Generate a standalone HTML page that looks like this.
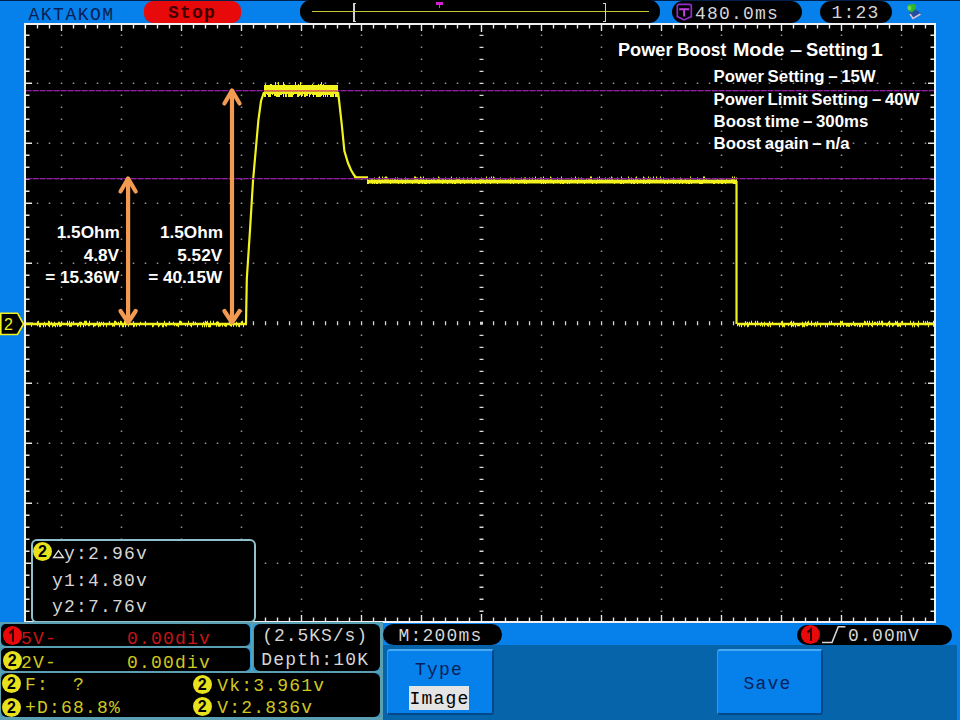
<!DOCTYPE html>
<html><head><meta charset="utf-8"><style>
*{margin:0;padding:0;box-sizing:border-box}
html,body{width:960px;height:720px;overflow:hidden;background:#0680ea;position:relative}
.a{position:absolute}
.m{position:absolute;font-family:"Liberation Mono",monospace;font-size:18px;line-height:18px;letter-spacing:1.2px;white-space:pre}
.c{position:absolute;font-family:"Liberation Sans",sans-serif;font-weight:bold;font-size:16.5px;line-height:18px;color:#fff;white-space:pre}
.pill{position:absolute;background:#000;border-radius:11px}
.s{position:absolute;font-family:"Liberation Serif",serif;line-height:18px;white-space:pre}
.s i{display:inline-block;font-style:normal;text-align:center;height:18px;vertical-align:top}
.circ{position:absolute;width:19px;height:19px;border-radius:50%;font-family:"Liberation Sans",sans-serif;font-weight:bold;font-size:16px;line-height:19px;text-align:center;color:#000}
</style></head><body>
<div class="a" style="left:0;top:0;width:960px;height:1px;background:#02204a"></div>
<div class="pill" style="left:144px;top:1px;width:97px;height:22px;background:#e80a0a;border-radius:9px"></div>
<div class="pill" style="left:300px;top:0px;width:360px;height:23px"></div>
<div class="a" style="left:312px;top:10.5px;width:337px;height:1.6px;background:#c8c832"></div>
<div class="a" style="left:353px;top:2.5px;width:1.6px;height:19.5px;background:#d0d0d0"></div>
<div class="a" style="left:353px;top:2.5px;width:2.8px;height:1.4px;background:#d0d0d0"></div>
<div class="a" style="left:353px;top:20.6px;width:2.8px;height:1.4px;background:#d0d0d0"></div>
<div class="a" style="left:604.5px;top:2.5px;width:1.6px;height:19.5px;background:#d0d0d0"></div>
<div class="a" style="left:603.3px;top:2.5px;width:2.8px;height:1.4px;background:#d0d0d0"></div>
<div class="a" style="left:603.3px;top:20.6px;width:2.8px;height:1.4px;background:#d0d0d0"></div>
<div class="a" style="left:436.3px;top:2.3px;width:6.6px;height:2.7px;background:#d020d0"></div>
<div class="a" style="left:438.8px;top:4.5px;width:1.6px;height:3px;background:#d040d0"></div>
<div class="pill" style="left:672px;top:1px;width:130px;height:22px"></div>
<svg class="a" style="left:676px;top:3px" width="17" height="19" viewBox="0 0 17 19"><path d="M3 1.3H13.5Q15.3 1.3 15.3 3.1V13.6L8.1 16.9L1.3 13.6V3.1Q1.3 1.3 3 1.3Z" fill="none" stroke="#9030c8" stroke-width="1.7"/><path d="M3.2 6.2H13.2M8.1 6.2V13.6" stroke="#c040e0" stroke-width="1.9"/></svg>
<div class="pill" style="left:820px;top:1px;width:72px;height:22px"></div>
<svg class="a" style="left:900px;top:0px" width="30" height="24" viewBox="0 0 30 24"><path d="M9 12.5L15.5 9.5L21.5 13.5L13 19.5Z" fill="#2050a0"/><path d="M10 14L13 18.5L20.5 14" fill="none" stroke="#dcc0d4" stroke-width="1.5"/><path d="M7 7.5C6.8 4.5 9.5 3.5 11.5 4.5C13.5 3.3 16.5 4.3 16 7.5C15.6 10 13.5 11 12 12.3C9.8 11.8 7.2 10.2 7 7.5Z" fill="#34b428"/><ellipse cx="9.5" cy="8" rx="2" ry="2.2" fill="#70e060" opacity="0.8"/></svg>

<div class="a" style="left:24px;top:23px;width:912px;height:600px;background:#000;border:2px solid #f0f0f0"></div>
<svg class="a" style="left:0;top:0" width="960" height="720" viewBox="0 0 960 720">
<path d="M36.7 82.5h1.6v1.6h-1.6zM36.7 142.5h1.6v1.6h-1.6zM36.7 202.5h1.6v1.6h-1.6zM36.7 262.5h1.6v1.6h-1.6zM36.7 382.5h1.6v1.6h-1.6zM36.7 442.5h1.6v1.6h-1.6zM36.7 502.5h1.6v1.6h-1.6zM36.7 562.5h1.6v1.6h-1.6zM48.7 82.5h1.6v1.6h-1.6zM48.7 142.5h1.6v1.6h-1.6zM48.7 202.5h1.6v1.6h-1.6zM48.7 262.5h1.6v1.6h-1.6zM48.7 382.5h1.6v1.6h-1.6zM48.7 442.5h1.6v1.6h-1.6zM48.7 502.5h1.6v1.6h-1.6zM48.7 562.5h1.6v1.6h-1.6zM60.7 34.5h1.6v1.6h-1.6zM60.7 46.5h1.6v1.6h-1.6zM60.7 58.5h1.6v1.6h-1.6zM60.7 70.5h1.6v1.6h-1.6zM60.7 82.5h1.6v1.6h-1.6zM60.7 94.5h1.6v1.6h-1.6zM60.7 106.5h1.6v1.6h-1.6zM60.7 118.5h1.6v1.6h-1.6zM60.7 130.5h1.6v1.6h-1.6zM60.7 142.5h1.6v1.6h-1.6zM60.7 154.5h1.6v1.6h-1.6zM60.7 166.5h1.6v1.6h-1.6zM60.7 178.5h1.6v1.6h-1.6zM60.7 190.5h1.6v1.6h-1.6zM60.7 202.5h1.6v1.6h-1.6zM60.7 214.5h1.6v1.6h-1.6zM60.7 226.5h1.6v1.6h-1.6zM60.7 238.5h1.6v1.6h-1.6zM60.7 250.5h1.6v1.6h-1.6zM60.7 262.5h1.6v1.6h-1.6zM60.7 274.5h1.6v1.6h-1.6zM60.7 286.5h1.6v1.6h-1.6zM60.7 298.5h1.6v1.6h-1.6zM60.7 310.5h1.6v1.6h-1.6zM60.7 334.5h1.6v1.6h-1.6zM60.7 346.5h1.6v1.6h-1.6zM60.7 358.5h1.6v1.6h-1.6zM60.7 370.5h1.6v1.6h-1.6zM60.7 382.5h1.6v1.6h-1.6zM60.7 394.5h1.6v1.6h-1.6zM60.7 406.5h1.6v1.6h-1.6zM60.7 418.5h1.6v1.6h-1.6zM60.7 430.5h1.6v1.6h-1.6zM60.7 442.5h1.6v1.6h-1.6zM60.7 454.5h1.6v1.6h-1.6zM60.7 466.5h1.6v1.6h-1.6zM60.7 478.5h1.6v1.6h-1.6zM60.7 490.5h1.6v1.6h-1.6zM60.7 502.5h1.6v1.6h-1.6zM60.7 514.5h1.6v1.6h-1.6zM60.7 526.5h1.6v1.6h-1.6zM60.7 538.5h1.6v1.6h-1.6zM60.7 550.5h1.6v1.6h-1.6zM60.7 562.5h1.6v1.6h-1.6zM60.7 574.5h1.6v1.6h-1.6zM60.7 586.5h1.6v1.6h-1.6zM60.7 598.5h1.6v1.6h-1.6zM60.7 610.5h1.6v1.6h-1.6zM72.7 82.5h1.6v1.6h-1.6zM72.7 142.5h1.6v1.6h-1.6zM72.7 202.5h1.6v1.6h-1.6zM72.7 262.5h1.6v1.6h-1.6zM72.7 382.5h1.6v1.6h-1.6zM72.7 442.5h1.6v1.6h-1.6zM72.7 502.5h1.6v1.6h-1.6zM72.7 562.5h1.6v1.6h-1.6zM84.7 82.5h1.6v1.6h-1.6zM84.7 142.5h1.6v1.6h-1.6zM84.7 202.5h1.6v1.6h-1.6zM84.7 262.5h1.6v1.6h-1.6zM84.7 382.5h1.6v1.6h-1.6zM84.7 442.5h1.6v1.6h-1.6zM84.7 502.5h1.6v1.6h-1.6zM84.7 562.5h1.6v1.6h-1.6zM96.7 82.5h1.6v1.6h-1.6zM96.7 142.5h1.6v1.6h-1.6zM96.7 202.5h1.6v1.6h-1.6zM96.7 262.5h1.6v1.6h-1.6zM96.7 382.5h1.6v1.6h-1.6zM96.7 442.5h1.6v1.6h-1.6zM96.7 502.5h1.6v1.6h-1.6zM96.7 562.5h1.6v1.6h-1.6zM108.7 82.5h1.6v1.6h-1.6zM108.7 142.5h1.6v1.6h-1.6zM108.7 202.5h1.6v1.6h-1.6zM108.7 262.5h1.6v1.6h-1.6zM108.7 382.5h1.6v1.6h-1.6zM108.7 442.5h1.6v1.6h-1.6zM108.7 502.5h1.6v1.6h-1.6zM108.7 562.5h1.6v1.6h-1.6zM120.7 34.5h1.6v1.6h-1.6zM120.7 46.5h1.6v1.6h-1.6zM120.7 58.5h1.6v1.6h-1.6zM120.7 70.5h1.6v1.6h-1.6zM120.7 82.5h1.6v1.6h-1.6zM120.7 94.5h1.6v1.6h-1.6zM120.7 106.5h1.6v1.6h-1.6zM120.7 118.5h1.6v1.6h-1.6zM120.7 130.5h1.6v1.6h-1.6zM120.7 142.5h1.6v1.6h-1.6zM120.7 154.5h1.6v1.6h-1.6zM120.7 166.5h1.6v1.6h-1.6zM120.7 178.5h1.6v1.6h-1.6zM120.7 190.5h1.6v1.6h-1.6zM120.7 202.5h1.6v1.6h-1.6zM120.7 214.5h1.6v1.6h-1.6zM120.7 226.5h1.6v1.6h-1.6zM120.7 238.5h1.6v1.6h-1.6zM120.7 250.5h1.6v1.6h-1.6zM120.7 262.5h1.6v1.6h-1.6zM120.7 274.5h1.6v1.6h-1.6zM120.7 286.5h1.6v1.6h-1.6zM120.7 298.5h1.6v1.6h-1.6zM120.7 310.5h1.6v1.6h-1.6zM120.7 334.5h1.6v1.6h-1.6zM120.7 346.5h1.6v1.6h-1.6zM120.7 358.5h1.6v1.6h-1.6zM120.7 370.5h1.6v1.6h-1.6zM120.7 382.5h1.6v1.6h-1.6zM120.7 394.5h1.6v1.6h-1.6zM120.7 406.5h1.6v1.6h-1.6zM120.7 418.5h1.6v1.6h-1.6zM120.7 430.5h1.6v1.6h-1.6zM120.7 442.5h1.6v1.6h-1.6zM120.7 454.5h1.6v1.6h-1.6zM120.7 466.5h1.6v1.6h-1.6zM120.7 478.5h1.6v1.6h-1.6zM120.7 490.5h1.6v1.6h-1.6zM120.7 502.5h1.6v1.6h-1.6zM120.7 514.5h1.6v1.6h-1.6zM120.7 526.5h1.6v1.6h-1.6zM120.7 538.5h1.6v1.6h-1.6zM120.7 550.5h1.6v1.6h-1.6zM120.7 562.5h1.6v1.6h-1.6zM120.7 574.5h1.6v1.6h-1.6zM120.7 586.5h1.6v1.6h-1.6zM120.7 598.5h1.6v1.6h-1.6zM120.7 610.5h1.6v1.6h-1.6zM132.7 82.5h1.6v1.6h-1.6zM132.7 142.5h1.6v1.6h-1.6zM132.7 202.5h1.6v1.6h-1.6zM132.7 262.5h1.6v1.6h-1.6zM132.7 382.5h1.6v1.6h-1.6zM132.7 442.5h1.6v1.6h-1.6zM132.7 502.5h1.6v1.6h-1.6zM132.7 562.5h1.6v1.6h-1.6zM144.7 82.5h1.6v1.6h-1.6zM144.7 142.5h1.6v1.6h-1.6zM144.7 202.5h1.6v1.6h-1.6zM144.7 262.5h1.6v1.6h-1.6zM144.7 382.5h1.6v1.6h-1.6zM144.7 442.5h1.6v1.6h-1.6zM144.7 502.5h1.6v1.6h-1.6zM144.7 562.5h1.6v1.6h-1.6zM156.7 82.5h1.6v1.6h-1.6zM156.7 142.5h1.6v1.6h-1.6zM156.7 202.5h1.6v1.6h-1.6zM156.7 262.5h1.6v1.6h-1.6zM156.7 382.5h1.6v1.6h-1.6zM156.7 442.5h1.6v1.6h-1.6zM156.7 502.5h1.6v1.6h-1.6zM156.7 562.5h1.6v1.6h-1.6zM168.7 82.5h1.6v1.6h-1.6zM168.7 142.5h1.6v1.6h-1.6zM168.7 202.5h1.6v1.6h-1.6zM168.7 262.5h1.6v1.6h-1.6zM168.7 382.5h1.6v1.6h-1.6zM168.7 442.5h1.6v1.6h-1.6zM168.7 502.5h1.6v1.6h-1.6zM168.7 562.5h1.6v1.6h-1.6zM180.7 34.5h1.6v1.6h-1.6zM180.7 46.5h1.6v1.6h-1.6zM180.7 58.5h1.6v1.6h-1.6zM180.7 70.5h1.6v1.6h-1.6zM180.7 82.5h1.6v1.6h-1.6zM180.7 94.5h1.6v1.6h-1.6zM180.7 106.5h1.6v1.6h-1.6zM180.7 118.5h1.6v1.6h-1.6zM180.7 130.5h1.6v1.6h-1.6zM180.7 142.5h1.6v1.6h-1.6zM180.7 154.5h1.6v1.6h-1.6zM180.7 166.5h1.6v1.6h-1.6zM180.7 178.5h1.6v1.6h-1.6zM180.7 190.5h1.6v1.6h-1.6zM180.7 202.5h1.6v1.6h-1.6zM180.7 214.5h1.6v1.6h-1.6zM180.7 226.5h1.6v1.6h-1.6zM180.7 238.5h1.6v1.6h-1.6zM180.7 250.5h1.6v1.6h-1.6zM180.7 262.5h1.6v1.6h-1.6zM180.7 274.5h1.6v1.6h-1.6zM180.7 286.5h1.6v1.6h-1.6zM180.7 298.5h1.6v1.6h-1.6zM180.7 310.5h1.6v1.6h-1.6zM180.7 334.5h1.6v1.6h-1.6zM180.7 346.5h1.6v1.6h-1.6zM180.7 358.5h1.6v1.6h-1.6zM180.7 370.5h1.6v1.6h-1.6zM180.7 382.5h1.6v1.6h-1.6zM180.7 394.5h1.6v1.6h-1.6zM180.7 406.5h1.6v1.6h-1.6zM180.7 418.5h1.6v1.6h-1.6zM180.7 430.5h1.6v1.6h-1.6zM180.7 442.5h1.6v1.6h-1.6zM180.7 454.5h1.6v1.6h-1.6zM180.7 466.5h1.6v1.6h-1.6zM180.7 478.5h1.6v1.6h-1.6zM180.7 490.5h1.6v1.6h-1.6zM180.7 502.5h1.6v1.6h-1.6zM180.7 514.5h1.6v1.6h-1.6zM180.7 526.5h1.6v1.6h-1.6zM180.7 538.5h1.6v1.6h-1.6zM180.7 550.5h1.6v1.6h-1.6zM180.7 562.5h1.6v1.6h-1.6zM180.7 574.5h1.6v1.6h-1.6zM180.7 586.5h1.6v1.6h-1.6zM180.7 598.5h1.6v1.6h-1.6zM180.7 610.5h1.6v1.6h-1.6zM192.7 82.5h1.6v1.6h-1.6zM192.7 142.5h1.6v1.6h-1.6zM192.7 202.5h1.6v1.6h-1.6zM192.7 262.5h1.6v1.6h-1.6zM192.7 382.5h1.6v1.6h-1.6zM192.7 442.5h1.6v1.6h-1.6zM192.7 502.5h1.6v1.6h-1.6zM192.7 562.5h1.6v1.6h-1.6zM204.7 82.5h1.6v1.6h-1.6zM204.7 142.5h1.6v1.6h-1.6zM204.7 202.5h1.6v1.6h-1.6zM204.7 262.5h1.6v1.6h-1.6zM204.7 382.5h1.6v1.6h-1.6zM204.7 442.5h1.6v1.6h-1.6zM204.7 502.5h1.6v1.6h-1.6zM204.7 562.5h1.6v1.6h-1.6zM216.7 82.5h1.6v1.6h-1.6zM216.7 142.5h1.6v1.6h-1.6zM216.7 202.5h1.6v1.6h-1.6zM216.7 262.5h1.6v1.6h-1.6zM216.7 382.5h1.6v1.6h-1.6zM216.7 442.5h1.6v1.6h-1.6zM216.7 502.5h1.6v1.6h-1.6zM216.7 562.5h1.6v1.6h-1.6zM228.7 82.5h1.6v1.6h-1.6zM228.7 142.5h1.6v1.6h-1.6zM228.7 202.5h1.6v1.6h-1.6zM228.7 262.5h1.6v1.6h-1.6zM228.7 382.5h1.6v1.6h-1.6zM228.7 442.5h1.6v1.6h-1.6zM228.7 502.5h1.6v1.6h-1.6zM228.7 562.5h1.6v1.6h-1.6zM240.7 34.5h1.6v1.6h-1.6zM240.7 46.5h1.6v1.6h-1.6zM240.7 58.5h1.6v1.6h-1.6zM240.7 70.5h1.6v1.6h-1.6zM240.7 82.5h1.6v1.6h-1.6zM240.7 94.5h1.6v1.6h-1.6zM240.7 106.5h1.6v1.6h-1.6zM240.7 118.5h1.6v1.6h-1.6zM240.7 130.5h1.6v1.6h-1.6zM240.7 142.5h1.6v1.6h-1.6zM240.7 154.5h1.6v1.6h-1.6zM240.7 166.5h1.6v1.6h-1.6zM240.7 178.5h1.6v1.6h-1.6zM240.7 190.5h1.6v1.6h-1.6zM240.7 202.5h1.6v1.6h-1.6zM240.7 214.5h1.6v1.6h-1.6zM240.7 226.5h1.6v1.6h-1.6zM240.7 238.5h1.6v1.6h-1.6zM240.7 250.5h1.6v1.6h-1.6zM240.7 262.5h1.6v1.6h-1.6zM240.7 274.5h1.6v1.6h-1.6zM240.7 286.5h1.6v1.6h-1.6zM240.7 298.5h1.6v1.6h-1.6zM240.7 310.5h1.6v1.6h-1.6zM240.7 334.5h1.6v1.6h-1.6zM240.7 346.5h1.6v1.6h-1.6zM240.7 358.5h1.6v1.6h-1.6zM240.7 370.5h1.6v1.6h-1.6zM240.7 382.5h1.6v1.6h-1.6zM240.7 394.5h1.6v1.6h-1.6zM240.7 406.5h1.6v1.6h-1.6zM240.7 418.5h1.6v1.6h-1.6zM240.7 430.5h1.6v1.6h-1.6zM240.7 442.5h1.6v1.6h-1.6zM240.7 454.5h1.6v1.6h-1.6zM240.7 466.5h1.6v1.6h-1.6zM240.7 478.5h1.6v1.6h-1.6zM240.7 490.5h1.6v1.6h-1.6zM240.7 502.5h1.6v1.6h-1.6zM240.7 514.5h1.6v1.6h-1.6zM240.7 526.5h1.6v1.6h-1.6zM240.7 538.5h1.6v1.6h-1.6zM240.7 550.5h1.6v1.6h-1.6zM240.7 562.5h1.6v1.6h-1.6zM240.7 574.5h1.6v1.6h-1.6zM240.7 586.5h1.6v1.6h-1.6zM240.7 598.5h1.6v1.6h-1.6zM240.7 610.5h1.6v1.6h-1.6zM252.7 82.5h1.6v1.6h-1.6zM252.7 142.5h1.6v1.6h-1.6zM252.7 202.5h1.6v1.6h-1.6zM252.7 262.5h1.6v1.6h-1.6zM252.7 382.5h1.6v1.6h-1.6zM252.7 442.5h1.6v1.6h-1.6zM252.7 502.5h1.6v1.6h-1.6zM252.7 562.5h1.6v1.6h-1.6zM264.7 82.5h1.6v1.6h-1.6zM264.7 142.5h1.6v1.6h-1.6zM264.7 202.5h1.6v1.6h-1.6zM264.7 262.5h1.6v1.6h-1.6zM264.7 382.5h1.6v1.6h-1.6zM264.7 442.5h1.6v1.6h-1.6zM264.7 502.5h1.6v1.6h-1.6zM264.7 562.5h1.6v1.6h-1.6zM276.7 82.5h1.6v1.6h-1.6zM276.7 142.5h1.6v1.6h-1.6zM276.7 202.5h1.6v1.6h-1.6zM276.7 262.5h1.6v1.6h-1.6zM276.7 382.5h1.6v1.6h-1.6zM276.7 442.5h1.6v1.6h-1.6zM276.7 502.5h1.6v1.6h-1.6zM276.7 562.5h1.6v1.6h-1.6zM288.7 82.5h1.6v1.6h-1.6zM288.7 142.5h1.6v1.6h-1.6zM288.7 202.5h1.6v1.6h-1.6zM288.7 262.5h1.6v1.6h-1.6zM288.7 382.5h1.6v1.6h-1.6zM288.7 442.5h1.6v1.6h-1.6zM288.7 502.5h1.6v1.6h-1.6zM288.7 562.5h1.6v1.6h-1.6zM300.7 34.5h1.6v1.6h-1.6zM300.7 46.5h1.6v1.6h-1.6zM300.7 58.5h1.6v1.6h-1.6zM300.7 70.5h1.6v1.6h-1.6zM300.7 82.5h1.6v1.6h-1.6zM300.7 94.5h1.6v1.6h-1.6zM300.7 106.5h1.6v1.6h-1.6zM300.7 118.5h1.6v1.6h-1.6zM300.7 130.5h1.6v1.6h-1.6zM300.7 142.5h1.6v1.6h-1.6zM300.7 154.5h1.6v1.6h-1.6zM300.7 166.5h1.6v1.6h-1.6zM300.7 178.5h1.6v1.6h-1.6zM300.7 190.5h1.6v1.6h-1.6zM300.7 202.5h1.6v1.6h-1.6zM300.7 214.5h1.6v1.6h-1.6zM300.7 226.5h1.6v1.6h-1.6zM300.7 238.5h1.6v1.6h-1.6zM300.7 250.5h1.6v1.6h-1.6zM300.7 262.5h1.6v1.6h-1.6zM300.7 274.5h1.6v1.6h-1.6zM300.7 286.5h1.6v1.6h-1.6zM300.7 298.5h1.6v1.6h-1.6zM300.7 310.5h1.6v1.6h-1.6zM300.7 334.5h1.6v1.6h-1.6zM300.7 346.5h1.6v1.6h-1.6zM300.7 358.5h1.6v1.6h-1.6zM300.7 370.5h1.6v1.6h-1.6zM300.7 382.5h1.6v1.6h-1.6zM300.7 394.5h1.6v1.6h-1.6zM300.7 406.5h1.6v1.6h-1.6zM300.7 418.5h1.6v1.6h-1.6zM300.7 430.5h1.6v1.6h-1.6zM300.7 442.5h1.6v1.6h-1.6zM300.7 454.5h1.6v1.6h-1.6zM300.7 466.5h1.6v1.6h-1.6zM300.7 478.5h1.6v1.6h-1.6zM300.7 490.5h1.6v1.6h-1.6zM300.7 502.5h1.6v1.6h-1.6zM300.7 514.5h1.6v1.6h-1.6zM300.7 526.5h1.6v1.6h-1.6zM300.7 538.5h1.6v1.6h-1.6zM300.7 550.5h1.6v1.6h-1.6zM300.7 562.5h1.6v1.6h-1.6zM300.7 574.5h1.6v1.6h-1.6zM300.7 586.5h1.6v1.6h-1.6zM300.7 598.5h1.6v1.6h-1.6zM300.7 610.5h1.6v1.6h-1.6zM312.7 82.5h1.6v1.6h-1.6zM312.7 142.5h1.6v1.6h-1.6zM312.7 202.5h1.6v1.6h-1.6zM312.7 262.5h1.6v1.6h-1.6zM312.7 382.5h1.6v1.6h-1.6zM312.7 442.5h1.6v1.6h-1.6zM312.7 502.5h1.6v1.6h-1.6zM312.7 562.5h1.6v1.6h-1.6zM324.7 82.5h1.6v1.6h-1.6zM324.7 142.5h1.6v1.6h-1.6zM324.7 202.5h1.6v1.6h-1.6zM324.7 262.5h1.6v1.6h-1.6zM324.7 382.5h1.6v1.6h-1.6zM324.7 442.5h1.6v1.6h-1.6zM324.7 502.5h1.6v1.6h-1.6zM324.7 562.5h1.6v1.6h-1.6zM336.7 82.5h1.6v1.6h-1.6zM336.7 142.5h1.6v1.6h-1.6zM336.7 202.5h1.6v1.6h-1.6zM336.7 262.5h1.6v1.6h-1.6zM336.7 382.5h1.6v1.6h-1.6zM336.7 442.5h1.6v1.6h-1.6zM336.7 502.5h1.6v1.6h-1.6zM336.7 562.5h1.6v1.6h-1.6zM348.7 82.5h1.6v1.6h-1.6zM348.7 142.5h1.6v1.6h-1.6zM348.7 202.5h1.6v1.6h-1.6zM348.7 262.5h1.6v1.6h-1.6zM348.7 382.5h1.6v1.6h-1.6zM348.7 442.5h1.6v1.6h-1.6zM348.7 502.5h1.6v1.6h-1.6zM348.7 562.5h1.6v1.6h-1.6zM360.7 34.5h1.6v1.6h-1.6zM360.7 46.5h1.6v1.6h-1.6zM360.7 58.5h1.6v1.6h-1.6zM360.7 70.5h1.6v1.6h-1.6zM360.7 82.5h1.6v1.6h-1.6zM360.7 94.5h1.6v1.6h-1.6zM360.7 106.5h1.6v1.6h-1.6zM360.7 118.5h1.6v1.6h-1.6zM360.7 130.5h1.6v1.6h-1.6zM360.7 142.5h1.6v1.6h-1.6zM360.7 154.5h1.6v1.6h-1.6zM360.7 166.5h1.6v1.6h-1.6zM360.7 178.5h1.6v1.6h-1.6zM360.7 190.5h1.6v1.6h-1.6zM360.7 202.5h1.6v1.6h-1.6zM360.7 214.5h1.6v1.6h-1.6zM360.7 226.5h1.6v1.6h-1.6zM360.7 238.5h1.6v1.6h-1.6zM360.7 250.5h1.6v1.6h-1.6zM360.7 262.5h1.6v1.6h-1.6zM360.7 274.5h1.6v1.6h-1.6zM360.7 286.5h1.6v1.6h-1.6zM360.7 298.5h1.6v1.6h-1.6zM360.7 310.5h1.6v1.6h-1.6zM360.7 334.5h1.6v1.6h-1.6zM360.7 346.5h1.6v1.6h-1.6zM360.7 358.5h1.6v1.6h-1.6zM360.7 370.5h1.6v1.6h-1.6zM360.7 382.5h1.6v1.6h-1.6zM360.7 394.5h1.6v1.6h-1.6zM360.7 406.5h1.6v1.6h-1.6zM360.7 418.5h1.6v1.6h-1.6zM360.7 430.5h1.6v1.6h-1.6zM360.7 442.5h1.6v1.6h-1.6zM360.7 454.5h1.6v1.6h-1.6zM360.7 466.5h1.6v1.6h-1.6zM360.7 478.5h1.6v1.6h-1.6zM360.7 490.5h1.6v1.6h-1.6zM360.7 502.5h1.6v1.6h-1.6zM360.7 514.5h1.6v1.6h-1.6zM360.7 526.5h1.6v1.6h-1.6zM360.7 538.5h1.6v1.6h-1.6zM360.7 550.5h1.6v1.6h-1.6zM360.7 562.5h1.6v1.6h-1.6zM360.7 574.5h1.6v1.6h-1.6zM360.7 586.5h1.6v1.6h-1.6zM360.7 598.5h1.6v1.6h-1.6zM360.7 610.5h1.6v1.6h-1.6zM372.7 82.5h1.6v1.6h-1.6zM372.7 142.5h1.6v1.6h-1.6zM372.7 202.5h1.6v1.6h-1.6zM372.7 262.5h1.6v1.6h-1.6zM372.7 382.5h1.6v1.6h-1.6zM372.7 442.5h1.6v1.6h-1.6zM372.7 502.5h1.6v1.6h-1.6zM372.7 562.5h1.6v1.6h-1.6zM384.7 82.5h1.6v1.6h-1.6zM384.7 142.5h1.6v1.6h-1.6zM384.7 202.5h1.6v1.6h-1.6zM384.7 262.5h1.6v1.6h-1.6zM384.7 382.5h1.6v1.6h-1.6zM384.7 442.5h1.6v1.6h-1.6zM384.7 502.5h1.6v1.6h-1.6zM384.7 562.5h1.6v1.6h-1.6zM396.7 82.5h1.6v1.6h-1.6zM396.7 142.5h1.6v1.6h-1.6zM396.7 202.5h1.6v1.6h-1.6zM396.7 262.5h1.6v1.6h-1.6zM396.7 382.5h1.6v1.6h-1.6zM396.7 442.5h1.6v1.6h-1.6zM396.7 502.5h1.6v1.6h-1.6zM396.7 562.5h1.6v1.6h-1.6zM408.7 82.5h1.6v1.6h-1.6zM408.7 142.5h1.6v1.6h-1.6zM408.7 202.5h1.6v1.6h-1.6zM408.7 262.5h1.6v1.6h-1.6zM408.7 382.5h1.6v1.6h-1.6zM408.7 442.5h1.6v1.6h-1.6zM408.7 502.5h1.6v1.6h-1.6zM408.7 562.5h1.6v1.6h-1.6zM420.7 34.5h1.6v1.6h-1.6zM420.7 46.5h1.6v1.6h-1.6zM420.7 58.5h1.6v1.6h-1.6zM420.7 70.5h1.6v1.6h-1.6zM420.7 82.5h1.6v1.6h-1.6zM420.7 94.5h1.6v1.6h-1.6zM420.7 106.5h1.6v1.6h-1.6zM420.7 118.5h1.6v1.6h-1.6zM420.7 130.5h1.6v1.6h-1.6zM420.7 142.5h1.6v1.6h-1.6zM420.7 154.5h1.6v1.6h-1.6zM420.7 166.5h1.6v1.6h-1.6zM420.7 178.5h1.6v1.6h-1.6zM420.7 190.5h1.6v1.6h-1.6zM420.7 202.5h1.6v1.6h-1.6zM420.7 214.5h1.6v1.6h-1.6zM420.7 226.5h1.6v1.6h-1.6zM420.7 238.5h1.6v1.6h-1.6zM420.7 250.5h1.6v1.6h-1.6zM420.7 262.5h1.6v1.6h-1.6zM420.7 274.5h1.6v1.6h-1.6zM420.7 286.5h1.6v1.6h-1.6zM420.7 298.5h1.6v1.6h-1.6zM420.7 310.5h1.6v1.6h-1.6zM420.7 334.5h1.6v1.6h-1.6zM420.7 346.5h1.6v1.6h-1.6zM420.7 358.5h1.6v1.6h-1.6zM420.7 370.5h1.6v1.6h-1.6zM420.7 382.5h1.6v1.6h-1.6zM420.7 394.5h1.6v1.6h-1.6zM420.7 406.5h1.6v1.6h-1.6zM420.7 418.5h1.6v1.6h-1.6zM420.7 430.5h1.6v1.6h-1.6zM420.7 442.5h1.6v1.6h-1.6zM420.7 454.5h1.6v1.6h-1.6zM420.7 466.5h1.6v1.6h-1.6zM420.7 478.5h1.6v1.6h-1.6zM420.7 490.5h1.6v1.6h-1.6zM420.7 502.5h1.6v1.6h-1.6zM420.7 514.5h1.6v1.6h-1.6zM420.7 526.5h1.6v1.6h-1.6zM420.7 538.5h1.6v1.6h-1.6zM420.7 550.5h1.6v1.6h-1.6zM420.7 562.5h1.6v1.6h-1.6zM420.7 574.5h1.6v1.6h-1.6zM420.7 586.5h1.6v1.6h-1.6zM420.7 598.5h1.6v1.6h-1.6zM420.7 610.5h1.6v1.6h-1.6zM432.7 82.5h1.6v1.6h-1.6zM432.7 142.5h1.6v1.6h-1.6zM432.7 202.5h1.6v1.6h-1.6zM432.7 262.5h1.6v1.6h-1.6zM432.7 382.5h1.6v1.6h-1.6zM432.7 442.5h1.6v1.6h-1.6zM432.7 502.5h1.6v1.6h-1.6zM432.7 562.5h1.6v1.6h-1.6zM444.7 82.5h1.6v1.6h-1.6zM444.7 142.5h1.6v1.6h-1.6zM444.7 202.5h1.6v1.6h-1.6zM444.7 262.5h1.6v1.6h-1.6zM444.7 382.5h1.6v1.6h-1.6zM444.7 442.5h1.6v1.6h-1.6zM444.7 502.5h1.6v1.6h-1.6zM444.7 562.5h1.6v1.6h-1.6zM456.7 82.5h1.6v1.6h-1.6zM456.7 142.5h1.6v1.6h-1.6zM456.7 202.5h1.6v1.6h-1.6zM456.7 262.5h1.6v1.6h-1.6zM456.7 382.5h1.6v1.6h-1.6zM456.7 442.5h1.6v1.6h-1.6zM456.7 502.5h1.6v1.6h-1.6zM456.7 562.5h1.6v1.6h-1.6zM468.7 82.5h1.6v1.6h-1.6zM468.7 142.5h1.6v1.6h-1.6zM468.7 202.5h1.6v1.6h-1.6zM468.7 262.5h1.6v1.6h-1.6zM468.7 382.5h1.6v1.6h-1.6zM468.7 442.5h1.6v1.6h-1.6zM468.7 502.5h1.6v1.6h-1.6zM468.7 562.5h1.6v1.6h-1.6zM492.7 82.5h1.6v1.6h-1.6zM492.7 142.5h1.6v1.6h-1.6zM492.7 202.5h1.6v1.6h-1.6zM492.7 262.5h1.6v1.6h-1.6zM492.7 382.5h1.6v1.6h-1.6zM492.7 442.5h1.6v1.6h-1.6zM492.7 502.5h1.6v1.6h-1.6zM492.7 562.5h1.6v1.6h-1.6zM504.7 82.5h1.6v1.6h-1.6zM504.7 142.5h1.6v1.6h-1.6zM504.7 202.5h1.6v1.6h-1.6zM504.7 262.5h1.6v1.6h-1.6zM504.7 382.5h1.6v1.6h-1.6zM504.7 442.5h1.6v1.6h-1.6zM504.7 502.5h1.6v1.6h-1.6zM504.7 562.5h1.6v1.6h-1.6zM516.7 82.5h1.6v1.6h-1.6zM516.7 142.5h1.6v1.6h-1.6zM516.7 202.5h1.6v1.6h-1.6zM516.7 262.5h1.6v1.6h-1.6zM516.7 382.5h1.6v1.6h-1.6zM516.7 442.5h1.6v1.6h-1.6zM516.7 502.5h1.6v1.6h-1.6zM516.7 562.5h1.6v1.6h-1.6zM528.7 82.5h1.6v1.6h-1.6zM528.7 142.5h1.6v1.6h-1.6zM528.7 202.5h1.6v1.6h-1.6zM528.7 262.5h1.6v1.6h-1.6zM528.7 382.5h1.6v1.6h-1.6zM528.7 442.5h1.6v1.6h-1.6zM528.7 502.5h1.6v1.6h-1.6zM528.7 562.5h1.6v1.6h-1.6zM540.7 34.5h1.6v1.6h-1.6zM540.7 46.5h1.6v1.6h-1.6zM540.7 58.5h1.6v1.6h-1.6zM540.7 70.5h1.6v1.6h-1.6zM540.7 82.5h1.6v1.6h-1.6zM540.7 94.5h1.6v1.6h-1.6zM540.7 106.5h1.6v1.6h-1.6zM540.7 118.5h1.6v1.6h-1.6zM540.7 130.5h1.6v1.6h-1.6zM540.7 142.5h1.6v1.6h-1.6zM540.7 154.5h1.6v1.6h-1.6zM540.7 166.5h1.6v1.6h-1.6zM540.7 178.5h1.6v1.6h-1.6zM540.7 190.5h1.6v1.6h-1.6zM540.7 202.5h1.6v1.6h-1.6zM540.7 214.5h1.6v1.6h-1.6zM540.7 226.5h1.6v1.6h-1.6zM540.7 238.5h1.6v1.6h-1.6zM540.7 250.5h1.6v1.6h-1.6zM540.7 262.5h1.6v1.6h-1.6zM540.7 274.5h1.6v1.6h-1.6zM540.7 286.5h1.6v1.6h-1.6zM540.7 298.5h1.6v1.6h-1.6zM540.7 310.5h1.6v1.6h-1.6zM540.7 334.5h1.6v1.6h-1.6zM540.7 346.5h1.6v1.6h-1.6zM540.7 358.5h1.6v1.6h-1.6zM540.7 370.5h1.6v1.6h-1.6zM540.7 382.5h1.6v1.6h-1.6zM540.7 394.5h1.6v1.6h-1.6zM540.7 406.5h1.6v1.6h-1.6zM540.7 418.5h1.6v1.6h-1.6zM540.7 430.5h1.6v1.6h-1.6zM540.7 442.5h1.6v1.6h-1.6zM540.7 454.5h1.6v1.6h-1.6zM540.7 466.5h1.6v1.6h-1.6zM540.7 478.5h1.6v1.6h-1.6zM540.7 490.5h1.6v1.6h-1.6zM540.7 502.5h1.6v1.6h-1.6zM540.7 514.5h1.6v1.6h-1.6zM540.7 526.5h1.6v1.6h-1.6zM540.7 538.5h1.6v1.6h-1.6zM540.7 550.5h1.6v1.6h-1.6zM540.7 562.5h1.6v1.6h-1.6zM540.7 574.5h1.6v1.6h-1.6zM540.7 586.5h1.6v1.6h-1.6zM540.7 598.5h1.6v1.6h-1.6zM540.7 610.5h1.6v1.6h-1.6zM552.7 82.5h1.6v1.6h-1.6zM552.7 142.5h1.6v1.6h-1.6zM552.7 202.5h1.6v1.6h-1.6zM552.7 262.5h1.6v1.6h-1.6zM552.7 382.5h1.6v1.6h-1.6zM552.7 442.5h1.6v1.6h-1.6zM552.7 502.5h1.6v1.6h-1.6zM552.7 562.5h1.6v1.6h-1.6zM564.7 82.5h1.6v1.6h-1.6zM564.7 142.5h1.6v1.6h-1.6zM564.7 202.5h1.6v1.6h-1.6zM564.7 262.5h1.6v1.6h-1.6zM564.7 382.5h1.6v1.6h-1.6zM564.7 442.5h1.6v1.6h-1.6zM564.7 502.5h1.6v1.6h-1.6zM564.7 562.5h1.6v1.6h-1.6zM576.7 82.5h1.6v1.6h-1.6zM576.7 142.5h1.6v1.6h-1.6zM576.7 202.5h1.6v1.6h-1.6zM576.7 262.5h1.6v1.6h-1.6zM576.7 382.5h1.6v1.6h-1.6zM576.7 442.5h1.6v1.6h-1.6zM576.7 502.5h1.6v1.6h-1.6zM576.7 562.5h1.6v1.6h-1.6zM588.7 82.5h1.6v1.6h-1.6zM588.7 142.5h1.6v1.6h-1.6zM588.7 202.5h1.6v1.6h-1.6zM588.7 262.5h1.6v1.6h-1.6zM588.7 382.5h1.6v1.6h-1.6zM588.7 442.5h1.6v1.6h-1.6zM588.7 502.5h1.6v1.6h-1.6zM588.7 562.5h1.6v1.6h-1.6zM600.7 34.5h1.6v1.6h-1.6zM600.7 46.5h1.6v1.6h-1.6zM600.7 58.5h1.6v1.6h-1.6zM600.7 70.5h1.6v1.6h-1.6zM600.7 82.5h1.6v1.6h-1.6zM600.7 94.5h1.6v1.6h-1.6zM600.7 106.5h1.6v1.6h-1.6zM600.7 118.5h1.6v1.6h-1.6zM600.7 130.5h1.6v1.6h-1.6zM600.7 142.5h1.6v1.6h-1.6zM600.7 154.5h1.6v1.6h-1.6zM600.7 166.5h1.6v1.6h-1.6zM600.7 178.5h1.6v1.6h-1.6zM600.7 190.5h1.6v1.6h-1.6zM600.7 202.5h1.6v1.6h-1.6zM600.7 214.5h1.6v1.6h-1.6zM600.7 226.5h1.6v1.6h-1.6zM600.7 238.5h1.6v1.6h-1.6zM600.7 250.5h1.6v1.6h-1.6zM600.7 262.5h1.6v1.6h-1.6zM600.7 274.5h1.6v1.6h-1.6zM600.7 286.5h1.6v1.6h-1.6zM600.7 298.5h1.6v1.6h-1.6zM600.7 310.5h1.6v1.6h-1.6zM600.7 334.5h1.6v1.6h-1.6zM600.7 346.5h1.6v1.6h-1.6zM600.7 358.5h1.6v1.6h-1.6zM600.7 370.5h1.6v1.6h-1.6zM600.7 382.5h1.6v1.6h-1.6zM600.7 394.5h1.6v1.6h-1.6zM600.7 406.5h1.6v1.6h-1.6zM600.7 418.5h1.6v1.6h-1.6zM600.7 430.5h1.6v1.6h-1.6zM600.7 442.5h1.6v1.6h-1.6zM600.7 454.5h1.6v1.6h-1.6zM600.7 466.5h1.6v1.6h-1.6zM600.7 478.5h1.6v1.6h-1.6zM600.7 490.5h1.6v1.6h-1.6zM600.7 502.5h1.6v1.6h-1.6zM600.7 514.5h1.6v1.6h-1.6zM600.7 526.5h1.6v1.6h-1.6zM600.7 538.5h1.6v1.6h-1.6zM600.7 550.5h1.6v1.6h-1.6zM600.7 562.5h1.6v1.6h-1.6zM600.7 574.5h1.6v1.6h-1.6zM600.7 586.5h1.6v1.6h-1.6zM600.7 598.5h1.6v1.6h-1.6zM600.7 610.5h1.6v1.6h-1.6zM612.7 82.5h1.6v1.6h-1.6zM612.7 142.5h1.6v1.6h-1.6zM612.7 202.5h1.6v1.6h-1.6zM612.7 262.5h1.6v1.6h-1.6zM612.7 382.5h1.6v1.6h-1.6zM612.7 442.5h1.6v1.6h-1.6zM612.7 502.5h1.6v1.6h-1.6zM612.7 562.5h1.6v1.6h-1.6zM624.7 82.5h1.6v1.6h-1.6zM624.7 142.5h1.6v1.6h-1.6zM624.7 202.5h1.6v1.6h-1.6zM624.7 262.5h1.6v1.6h-1.6zM624.7 382.5h1.6v1.6h-1.6zM624.7 442.5h1.6v1.6h-1.6zM624.7 502.5h1.6v1.6h-1.6zM624.7 562.5h1.6v1.6h-1.6zM636.7 82.5h1.6v1.6h-1.6zM636.7 142.5h1.6v1.6h-1.6zM636.7 202.5h1.6v1.6h-1.6zM636.7 262.5h1.6v1.6h-1.6zM636.7 382.5h1.6v1.6h-1.6zM636.7 442.5h1.6v1.6h-1.6zM636.7 502.5h1.6v1.6h-1.6zM636.7 562.5h1.6v1.6h-1.6zM648.7 82.5h1.6v1.6h-1.6zM648.7 142.5h1.6v1.6h-1.6zM648.7 202.5h1.6v1.6h-1.6zM648.7 262.5h1.6v1.6h-1.6zM648.7 382.5h1.6v1.6h-1.6zM648.7 442.5h1.6v1.6h-1.6zM648.7 502.5h1.6v1.6h-1.6zM648.7 562.5h1.6v1.6h-1.6zM660.7 34.5h1.6v1.6h-1.6zM660.7 46.5h1.6v1.6h-1.6zM660.7 58.5h1.6v1.6h-1.6zM660.7 70.5h1.6v1.6h-1.6zM660.7 82.5h1.6v1.6h-1.6zM660.7 94.5h1.6v1.6h-1.6zM660.7 106.5h1.6v1.6h-1.6zM660.7 118.5h1.6v1.6h-1.6zM660.7 130.5h1.6v1.6h-1.6zM660.7 142.5h1.6v1.6h-1.6zM660.7 154.5h1.6v1.6h-1.6zM660.7 166.5h1.6v1.6h-1.6zM660.7 178.5h1.6v1.6h-1.6zM660.7 190.5h1.6v1.6h-1.6zM660.7 202.5h1.6v1.6h-1.6zM660.7 214.5h1.6v1.6h-1.6zM660.7 226.5h1.6v1.6h-1.6zM660.7 238.5h1.6v1.6h-1.6zM660.7 250.5h1.6v1.6h-1.6zM660.7 262.5h1.6v1.6h-1.6zM660.7 274.5h1.6v1.6h-1.6zM660.7 286.5h1.6v1.6h-1.6zM660.7 298.5h1.6v1.6h-1.6zM660.7 310.5h1.6v1.6h-1.6zM660.7 334.5h1.6v1.6h-1.6zM660.7 346.5h1.6v1.6h-1.6zM660.7 358.5h1.6v1.6h-1.6zM660.7 370.5h1.6v1.6h-1.6zM660.7 382.5h1.6v1.6h-1.6zM660.7 394.5h1.6v1.6h-1.6zM660.7 406.5h1.6v1.6h-1.6zM660.7 418.5h1.6v1.6h-1.6zM660.7 430.5h1.6v1.6h-1.6zM660.7 442.5h1.6v1.6h-1.6zM660.7 454.5h1.6v1.6h-1.6zM660.7 466.5h1.6v1.6h-1.6zM660.7 478.5h1.6v1.6h-1.6zM660.7 490.5h1.6v1.6h-1.6zM660.7 502.5h1.6v1.6h-1.6zM660.7 514.5h1.6v1.6h-1.6zM660.7 526.5h1.6v1.6h-1.6zM660.7 538.5h1.6v1.6h-1.6zM660.7 550.5h1.6v1.6h-1.6zM660.7 562.5h1.6v1.6h-1.6zM660.7 574.5h1.6v1.6h-1.6zM660.7 586.5h1.6v1.6h-1.6zM660.7 598.5h1.6v1.6h-1.6zM660.7 610.5h1.6v1.6h-1.6zM672.7 82.5h1.6v1.6h-1.6zM672.7 142.5h1.6v1.6h-1.6zM672.7 202.5h1.6v1.6h-1.6zM672.7 262.5h1.6v1.6h-1.6zM672.7 382.5h1.6v1.6h-1.6zM672.7 442.5h1.6v1.6h-1.6zM672.7 502.5h1.6v1.6h-1.6zM672.7 562.5h1.6v1.6h-1.6zM684.7 82.5h1.6v1.6h-1.6zM684.7 142.5h1.6v1.6h-1.6zM684.7 202.5h1.6v1.6h-1.6zM684.7 262.5h1.6v1.6h-1.6zM684.7 382.5h1.6v1.6h-1.6zM684.7 442.5h1.6v1.6h-1.6zM684.7 502.5h1.6v1.6h-1.6zM684.7 562.5h1.6v1.6h-1.6zM696.7 82.5h1.6v1.6h-1.6zM696.7 142.5h1.6v1.6h-1.6zM696.7 202.5h1.6v1.6h-1.6zM696.7 262.5h1.6v1.6h-1.6zM696.7 382.5h1.6v1.6h-1.6zM696.7 442.5h1.6v1.6h-1.6zM696.7 502.5h1.6v1.6h-1.6zM696.7 562.5h1.6v1.6h-1.6zM708.7 82.5h1.6v1.6h-1.6zM708.7 142.5h1.6v1.6h-1.6zM708.7 202.5h1.6v1.6h-1.6zM708.7 262.5h1.6v1.6h-1.6zM708.7 382.5h1.6v1.6h-1.6zM708.7 442.5h1.6v1.6h-1.6zM708.7 502.5h1.6v1.6h-1.6zM708.7 562.5h1.6v1.6h-1.6zM720.7 34.5h1.6v1.6h-1.6zM720.7 46.5h1.6v1.6h-1.6zM720.7 58.5h1.6v1.6h-1.6zM720.7 70.5h1.6v1.6h-1.6zM720.7 82.5h1.6v1.6h-1.6zM720.7 94.5h1.6v1.6h-1.6zM720.7 106.5h1.6v1.6h-1.6zM720.7 118.5h1.6v1.6h-1.6zM720.7 130.5h1.6v1.6h-1.6zM720.7 142.5h1.6v1.6h-1.6zM720.7 154.5h1.6v1.6h-1.6zM720.7 166.5h1.6v1.6h-1.6zM720.7 178.5h1.6v1.6h-1.6zM720.7 190.5h1.6v1.6h-1.6zM720.7 202.5h1.6v1.6h-1.6zM720.7 214.5h1.6v1.6h-1.6zM720.7 226.5h1.6v1.6h-1.6zM720.7 238.5h1.6v1.6h-1.6zM720.7 250.5h1.6v1.6h-1.6zM720.7 262.5h1.6v1.6h-1.6zM720.7 274.5h1.6v1.6h-1.6zM720.7 286.5h1.6v1.6h-1.6zM720.7 298.5h1.6v1.6h-1.6zM720.7 310.5h1.6v1.6h-1.6zM720.7 334.5h1.6v1.6h-1.6zM720.7 346.5h1.6v1.6h-1.6zM720.7 358.5h1.6v1.6h-1.6zM720.7 370.5h1.6v1.6h-1.6zM720.7 382.5h1.6v1.6h-1.6zM720.7 394.5h1.6v1.6h-1.6zM720.7 406.5h1.6v1.6h-1.6zM720.7 418.5h1.6v1.6h-1.6zM720.7 430.5h1.6v1.6h-1.6zM720.7 442.5h1.6v1.6h-1.6zM720.7 454.5h1.6v1.6h-1.6zM720.7 466.5h1.6v1.6h-1.6zM720.7 478.5h1.6v1.6h-1.6zM720.7 490.5h1.6v1.6h-1.6zM720.7 502.5h1.6v1.6h-1.6zM720.7 514.5h1.6v1.6h-1.6zM720.7 526.5h1.6v1.6h-1.6zM720.7 538.5h1.6v1.6h-1.6zM720.7 550.5h1.6v1.6h-1.6zM720.7 562.5h1.6v1.6h-1.6zM720.7 574.5h1.6v1.6h-1.6zM720.7 586.5h1.6v1.6h-1.6zM720.7 598.5h1.6v1.6h-1.6zM720.7 610.5h1.6v1.6h-1.6zM732.7 82.5h1.6v1.6h-1.6zM732.7 142.5h1.6v1.6h-1.6zM732.7 202.5h1.6v1.6h-1.6zM732.7 262.5h1.6v1.6h-1.6zM732.7 382.5h1.6v1.6h-1.6zM732.7 442.5h1.6v1.6h-1.6zM732.7 502.5h1.6v1.6h-1.6zM732.7 562.5h1.6v1.6h-1.6zM744.7 82.5h1.6v1.6h-1.6zM744.7 142.5h1.6v1.6h-1.6zM744.7 202.5h1.6v1.6h-1.6zM744.7 262.5h1.6v1.6h-1.6zM744.7 382.5h1.6v1.6h-1.6zM744.7 442.5h1.6v1.6h-1.6zM744.7 502.5h1.6v1.6h-1.6zM744.7 562.5h1.6v1.6h-1.6zM756.7 82.5h1.6v1.6h-1.6zM756.7 142.5h1.6v1.6h-1.6zM756.7 202.5h1.6v1.6h-1.6zM756.7 262.5h1.6v1.6h-1.6zM756.7 382.5h1.6v1.6h-1.6zM756.7 442.5h1.6v1.6h-1.6zM756.7 502.5h1.6v1.6h-1.6zM756.7 562.5h1.6v1.6h-1.6zM768.7 82.5h1.6v1.6h-1.6zM768.7 142.5h1.6v1.6h-1.6zM768.7 202.5h1.6v1.6h-1.6zM768.7 262.5h1.6v1.6h-1.6zM768.7 382.5h1.6v1.6h-1.6zM768.7 442.5h1.6v1.6h-1.6zM768.7 502.5h1.6v1.6h-1.6zM768.7 562.5h1.6v1.6h-1.6zM780.7 34.5h1.6v1.6h-1.6zM780.7 46.5h1.6v1.6h-1.6zM780.7 58.5h1.6v1.6h-1.6zM780.7 70.5h1.6v1.6h-1.6zM780.7 82.5h1.6v1.6h-1.6zM780.7 94.5h1.6v1.6h-1.6zM780.7 106.5h1.6v1.6h-1.6zM780.7 118.5h1.6v1.6h-1.6zM780.7 130.5h1.6v1.6h-1.6zM780.7 142.5h1.6v1.6h-1.6zM780.7 154.5h1.6v1.6h-1.6zM780.7 166.5h1.6v1.6h-1.6zM780.7 178.5h1.6v1.6h-1.6zM780.7 190.5h1.6v1.6h-1.6zM780.7 202.5h1.6v1.6h-1.6zM780.7 214.5h1.6v1.6h-1.6zM780.7 226.5h1.6v1.6h-1.6zM780.7 238.5h1.6v1.6h-1.6zM780.7 250.5h1.6v1.6h-1.6zM780.7 262.5h1.6v1.6h-1.6zM780.7 274.5h1.6v1.6h-1.6zM780.7 286.5h1.6v1.6h-1.6zM780.7 298.5h1.6v1.6h-1.6zM780.7 310.5h1.6v1.6h-1.6zM780.7 334.5h1.6v1.6h-1.6zM780.7 346.5h1.6v1.6h-1.6zM780.7 358.5h1.6v1.6h-1.6zM780.7 370.5h1.6v1.6h-1.6zM780.7 382.5h1.6v1.6h-1.6zM780.7 394.5h1.6v1.6h-1.6zM780.7 406.5h1.6v1.6h-1.6zM780.7 418.5h1.6v1.6h-1.6zM780.7 430.5h1.6v1.6h-1.6zM780.7 442.5h1.6v1.6h-1.6zM780.7 454.5h1.6v1.6h-1.6zM780.7 466.5h1.6v1.6h-1.6zM780.7 478.5h1.6v1.6h-1.6zM780.7 490.5h1.6v1.6h-1.6zM780.7 502.5h1.6v1.6h-1.6zM780.7 514.5h1.6v1.6h-1.6zM780.7 526.5h1.6v1.6h-1.6zM780.7 538.5h1.6v1.6h-1.6zM780.7 550.5h1.6v1.6h-1.6zM780.7 562.5h1.6v1.6h-1.6zM780.7 574.5h1.6v1.6h-1.6zM780.7 586.5h1.6v1.6h-1.6zM780.7 598.5h1.6v1.6h-1.6zM780.7 610.5h1.6v1.6h-1.6zM792.7 82.5h1.6v1.6h-1.6zM792.7 142.5h1.6v1.6h-1.6zM792.7 202.5h1.6v1.6h-1.6zM792.7 262.5h1.6v1.6h-1.6zM792.7 382.5h1.6v1.6h-1.6zM792.7 442.5h1.6v1.6h-1.6zM792.7 502.5h1.6v1.6h-1.6zM792.7 562.5h1.6v1.6h-1.6zM804.7 82.5h1.6v1.6h-1.6zM804.7 142.5h1.6v1.6h-1.6zM804.7 202.5h1.6v1.6h-1.6zM804.7 262.5h1.6v1.6h-1.6zM804.7 382.5h1.6v1.6h-1.6zM804.7 442.5h1.6v1.6h-1.6zM804.7 502.5h1.6v1.6h-1.6zM804.7 562.5h1.6v1.6h-1.6zM816.7 82.5h1.6v1.6h-1.6zM816.7 142.5h1.6v1.6h-1.6zM816.7 202.5h1.6v1.6h-1.6zM816.7 262.5h1.6v1.6h-1.6zM816.7 382.5h1.6v1.6h-1.6zM816.7 442.5h1.6v1.6h-1.6zM816.7 502.5h1.6v1.6h-1.6zM816.7 562.5h1.6v1.6h-1.6zM828.7 82.5h1.6v1.6h-1.6zM828.7 142.5h1.6v1.6h-1.6zM828.7 202.5h1.6v1.6h-1.6zM828.7 262.5h1.6v1.6h-1.6zM828.7 382.5h1.6v1.6h-1.6zM828.7 442.5h1.6v1.6h-1.6zM828.7 502.5h1.6v1.6h-1.6zM828.7 562.5h1.6v1.6h-1.6zM840.7 34.5h1.6v1.6h-1.6zM840.7 46.5h1.6v1.6h-1.6zM840.7 58.5h1.6v1.6h-1.6zM840.7 70.5h1.6v1.6h-1.6zM840.7 82.5h1.6v1.6h-1.6zM840.7 94.5h1.6v1.6h-1.6zM840.7 106.5h1.6v1.6h-1.6zM840.7 118.5h1.6v1.6h-1.6zM840.7 130.5h1.6v1.6h-1.6zM840.7 142.5h1.6v1.6h-1.6zM840.7 154.5h1.6v1.6h-1.6zM840.7 166.5h1.6v1.6h-1.6zM840.7 178.5h1.6v1.6h-1.6zM840.7 190.5h1.6v1.6h-1.6zM840.7 202.5h1.6v1.6h-1.6zM840.7 214.5h1.6v1.6h-1.6zM840.7 226.5h1.6v1.6h-1.6zM840.7 238.5h1.6v1.6h-1.6zM840.7 250.5h1.6v1.6h-1.6zM840.7 262.5h1.6v1.6h-1.6zM840.7 274.5h1.6v1.6h-1.6zM840.7 286.5h1.6v1.6h-1.6zM840.7 298.5h1.6v1.6h-1.6zM840.7 310.5h1.6v1.6h-1.6zM840.7 334.5h1.6v1.6h-1.6zM840.7 346.5h1.6v1.6h-1.6zM840.7 358.5h1.6v1.6h-1.6zM840.7 370.5h1.6v1.6h-1.6zM840.7 382.5h1.6v1.6h-1.6zM840.7 394.5h1.6v1.6h-1.6zM840.7 406.5h1.6v1.6h-1.6zM840.7 418.5h1.6v1.6h-1.6zM840.7 430.5h1.6v1.6h-1.6zM840.7 442.5h1.6v1.6h-1.6zM840.7 454.5h1.6v1.6h-1.6zM840.7 466.5h1.6v1.6h-1.6zM840.7 478.5h1.6v1.6h-1.6zM840.7 490.5h1.6v1.6h-1.6zM840.7 502.5h1.6v1.6h-1.6zM840.7 514.5h1.6v1.6h-1.6zM840.7 526.5h1.6v1.6h-1.6zM840.7 538.5h1.6v1.6h-1.6zM840.7 550.5h1.6v1.6h-1.6zM840.7 562.5h1.6v1.6h-1.6zM840.7 574.5h1.6v1.6h-1.6zM840.7 586.5h1.6v1.6h-1.6zM840.7 598.5h1.6v1.6h-1.6zM840.7 610.5h1.6v1.6h-1.6zM852.7 82.5h1.6v1.6h-1.6zM852.7 142.5h1.6v1.6h-1.6zM852.7 202.5h1.6v1.6h-1.6zM852.7 262.5h1.6v1.6h-1.6zM852.7 382.5h1.6v1.6h-1.6zM852.7 442.5h1.6v1.6h-1.6zM852.7 502.5h1.6v1.6h-1.6zM852.7 562.5h1.6v1.6h-1.6zM864.7 82.5h1.6v1.6h-1.6zM864.7 142.5h1.6v1.6h-1.6zM864.7 202.5h1.6v1.6h-1.6zM864.7 262.5h1.6v1.6h-1.6zM864.7 382.5h1.6v1.6h-1.6zM864.7 442.5h1.6v1.6h-1.6zM864.7 502.5h1.6v1.6h-1.6zM864.7 562.5h1.6v1.6h-1.6zM876.7 82.5h1.6v1.6h-1.6zM876.7 142.5h1.6v1.6h-1.6zM876.7 202.5h1.6v1.6h-1.6zM876.7 262.5h1.6v1.6h-1.6zM876.7 382.5h1.6v1.6h-1.6zM876.7 442.5h1.6v1.6h-1.6zM876.7 502.5h1.6v1.6h-1.6zM876.7 562.5h1.6v1.6h-1.6zM888.7 82.5h1.6v1.6h-1.6zM888.7 142.5h1.6v1.6h-1.6zM888.7 202.5h1.6v1.6h-1.6zM888.7 262.5h1.6v1.6h-1.6zM888.7 382.5h1.6v1.6h-1.6zM888.7 442.5h1.6v1.6h-1.6zM888.7 502.5h1.6v1.6h-1.6zM888.7 562.5h1.6v1.6h-1.6zM900.7 34.5h1.6v1.6h-1.6zM900.7 46.5h1.6v1.6h-1.6zM900.7 58.5h1.6v1.6h-1.6zM900.7 70.5h1.6v1.6h-1.6zM900.7 82.5h1.6v1.6h-1.6zM900.7 94.5h1.6v1.6h-1.6zM900.7 106.5h1.6v1.6h-1.6zM900.7 118.5h1.6v1.6h-1.6zM900.7 130.5h1.6v1.6h-1.6zM900.7 142.5h1.6v1.6h-1.6zM900.7 154.5h1.6v1.6h-1.6zM900.7 166.5h1.6v1.6h-1.6zM900.7 178.5h1.6v1.6h-1.6zM900.7 190.5h1.6v1.6h-1.6zM900.7 202.5h1.6v1.6h-1.6zM900.7 214.5h1.6v1.6h-1.6zM900.7 226.5h1.6v1.6h-1.6zM900.7 238.5h1.6v1.6h-1.6zM900.7 250.5h1.6v1.6h-1.6zM900.7 262.5h1.6v1.6h-1.6zM900.7 274.5h1.6v1.6h-1.6zM900.7 286.5h1.6v1.6h-1.6zM900.7 298.5h1.6v1.6h-1.6zM900.7 310.5h1.6v1.6h-1.6zM900.7 334.5h1.6v1.6h-1.6zM900.7 346.5h1.6v1.6h-1.6zM900.7 358.5h1.6v1.6h-1.6zM900.7 370.5h1.6v1.6h-1.6zM900.7 382.5h1.6v1.6h-1.6zM900.7 394.5h1.6v1.6h-1.6zM900.7 406.5h1.6v1.6h-1.6zM900.7 418.5h1.6v1.6h-1.6zM900.7 430.5h1.6v1.6h-1.6zM900.7 442.5h1.6v1.6h-1.6zM900.7 454.5h1.6v1.6h-1.6zM900.7 466.5h1.6v1.6h-1.6zM900.7 478.5h1.6v1.6h-1.6zM900.7 490.5h1.6v1.6h-1.6zM900.7 502.5h1.6v1.6h-1.6zM900.7 514.5h1.6v1.6h-1.6zM900.7 526.5h1.6v1.6h-1.6zM900.7 538.5h1.6v1.6h-1.6zM900.7 550.5h1.6v1.6h-1.6zM900.7 562.5h1.6v1.6h-1.6zM900.7 574.5h1.6v1.6h-1.6zM900.7 586.5h1.6v1.6h-1.6zM900.7 598.5h1.6v1.6h-1.6zM900.7 610.5h1.6v1.6h-1.6zM912.7 82.5h1.6v1.6h-1.6zM912.7 142.5h1.6v1.6h-1.6zM912.7 202.5h1.6v1.6h-1.6zM912.7 262.5h1.6v1.6h-1.6zM912.7 382.5h1.6v1.6h-1.6zM912.7 442.5h1.6v1.6h-1.6zM912.7 502.5h1.6v1.6h-1.6zM912.7 562.5h1.6v1.6h-1.6zM924.7 82.5h1.6v1.6h-1.6zM924.7 142.5h1.6v1.6h-1.6zM924.7 202.5h1.6v1.6h-1.6zM924.7 262.5h1.6v1.6h-1.6zM924.7 382.5h1.6v1.6h-1.6zM924.7 442.5h1.6v1.6h-1.6zM924.7 502.5h1.6v1.6h-1.6zM924.7 562.5h1.6v1.6h-1.6z" fill="#8a8a8a"/><path d="M479.5 34.7h4v1.3h-4zM479.5 46.7h4v1.3h-4zM479.5 58.7h4v1.3h-4zM479.5 70.7h4v1.3h-4zM479.5 82.7h4v1.3h-4zM479.5 94.7h4v1.3h-4zM479.5 106.7h4v1.3h-4zM479.5 118.7h4v1.3h-4zM479.5 130.7h4v1.3h-4zM479.5 142.7h4v1.3h-4zM479.5 154.7h4v1.3h-4zM479.5 166.7h4v1.3h-4zM479.5 178.7h4v1.3h-4zM479.5 190.7h4v1.3h-4zM479.5 202.7h4v1.3h-4zM479.5 214.7h4v1.3h-4zM479.5 226.7h4v1.3h-4zM479.5 238.7h4v1.3h-4zM479.5 250.7h4v1.3h-4zM479.5 262.7h4v1.3h-4zM479.5 274.7h4v1.3h-4zM479.5 286.7h4v1.3h-4zM479.5 298.7h4v1.3h-4zM479.5 310.7h4v1.3h-4zM479.5 334.7h4v1.3h-4zM479.5 346.7h4v1.3h-4zM479.5 358.7h4v1.3h-4zM479.5 370.7h4v1.3h-4zM479.5 382.7h4v1.3h-4zM479.5 394.7h4v1.3h-4zM479.5 406.7h4v1.3h-4zM479.5 418.7h4v1.3h-4zM479.5 430.7h4v1.3h-4zM479.5 442.7h4v1.3h-4zM479.5 454.7h4v1.3h-4zM479.5 466.7h4v1.3h-4zM479.5 478.7h4v1.3h-4zM479.5 490.7h4v1.3h-4zM479.5 502.7h4v1.3h-4zM479.5 514.6h4v1.3h-4zM479.5 526.6h4v1.3h-4zM479.5 538.6h4v1.3h-4zM479.5 550.6h4v1.3h-4zM479.5 562.6h4v1.3h-4zM479.5 574.6h4v1.3h-4zM479.5 586.6h4v1.3h-4zM479.5 598.6h4v1.3h-4zM479.5 610.6h4v1.3h-4zM36.9 321.3h1.3v4h-1.3zM48.9 321.3h1.3v4h-1.3zM60.9 321.3h1.3v4h-1.3zM72.8 321.3h1.3v4h-1.3zM84.8 321.3h1.3v4h-1.3zM96.8 321.3h1.3v4h-1.3zM108.8 321.3h1.3v4h-1.3zM120.8 321.3h1.3v4h-1.3zM132.8 321.3h1.3v4h-1.3zM144.8 321.3h1.3v4h-1.3zM156.8 321.3h1.3v4h-1.3zM168.8 321.3h1.3v4h-1.3zM180.8 321.3h1.3v4h-1.3zM192.8 321.3h1.3v4h-1.3zM204.8 321.3h1.3v4h-1.3zM216.8 321.3h1.3v4h-1.3zM228.8 321.3h1.3v4h-1.3zM240.8 321.3h1.3v4h-1.3zM252.8 321.3h1.3v4h-1.3zM264.9 321.3h1.3v4h-1.3zM276.9 321.3h1.3v4h-1.3zM288.9 321.3h1.3v4h-1.3zM300.9 321.3h1.3v4h-1.3zM312.9 321.3h1.3v4h-1.3zM324.9 321.3h1.3v4h-1.3zM336.9 321.3h1.3v4h-1.3zM348.9 321.3h1.3v4h-1.3zM360.9 321.3h1.3v4h-1.3zM372.9 321.3h1.3v4h-1.3zM384.9 321.3h1.3v4h-1.3zM396.9 321.3h1.3v4h-1.3zM408.9 321.3h1.3v4h-1.3zM420.9 321.3h1.3v4h-1.3zM432.9 321.3h1.3v4h-1.3zM444.9 321.3h1.3v4h-1.3zM456.9 321.3h1.3v4h-1.3zM468.9 321.3h1.3v4h-1.3zM492.9 321.3h1.3v4h-1.3zM504.9 321.3h1.3v4h-1.3zM516.9 321.3h1.3v4h-1.3zM528.9 321.3h1.3v4h-1.3zM540.9 321.3h1.3v4h-1.3zM552.9 321.3h1.3v4h-1.3zM564.9 321.3h1.3v4h-1.3zM576.9 321.3h1.3v4h-1.3zM588.9 321.3h1.3v4h-1.3zM600.9 321.3h1.3v4h-1.3zM612.9 321.3h1.3v4h-1.3zM624.9 321.3h1.3v4h-1.3zM636.9 321.3h1.3v4h-1.3zM648.9 321.3h1.3v4h-1.3zM660.9 321.3h1.3v4h-1.3zM672.9 321.3h1.3v4h-1.3zM684.9 321.3h1.3v4h-1.3zM696.9 321.3h1.3v4h-1.3zM708.9 321.3h1.3v4h-1.3zM720.9 321.3h1.3v4h-1.3zM732.9 321.3h1.3v4h-1.3zM744.9 321.3h1.3v4h-1.3zM756.9 321.3h1.3v4h-1.3zM768.9 321.3h1.3v4h-1.3zM780.9 321.3h1.3v4h-1.3zM792.9 321.3h1.3v4h-1.3zM804.9 321.3h1.3v4h-1.3zM816.9 321.3h1.3v4h-1.3zM828.9 321.3h1.3v4h-1.3zM840.9 321.3h1.3v4h-1.3zM852.9 321.3h1.3v4h-1.3zM864.9 321.3h1.3v4h-1.3zM876.9 321.3h1.3v4h-1.3zM888.9 321.3h1.3v4h-1.3zM900.9 321.3h1.3v4h-1.3zM912.9 321.3h1.3v4h-1.3zM924.9 321.3h1.3v4h-1.3zM480.0 321.8h3v3h-3z" fill="#d8d8d8"/><path d="M36.8 25.0h1.4v3.5h-1.4zM36.8 621.0h1.4v-3.5h-1.4zM48.8 25.0h1.4v3.5h-1.4zM48.8 621.0h1.4v-3.5h-1.4zM60.8 25.0h1.4v6.0h-1.4zM60.8 621.0h1.4v-6.0h-1.4zM72.8 25.0h1.4v3.5h-1.4zM72.8 621.0h1.4v-3.5h-1.4zM84.8 25.0h1.4v3.5h-1.4zM84.8 621.0h1.4v-3.5h-1.4zM96.8 25.0h1.4v3.5h-1.4zM96.8 621.0h1.4v-3.5h-1.4zM108.8 25.0h1.4v3.5h-1.4zM108.8 621.0h1.4v-3.5h-1.4zM120.8 25.0h1.4v6.0h-1.4zM120.8 621.0h1.4v-6.0h-1.4zM132.8 25.0h1.4v3.5h-1.4zM132.8 621.0h1.4v-3.5h-1.4zM144.8 25.0h1.4v3.5h-1.4zM144.8 621.0h1.4v-3.5h-1.4zM156.8 25.0h1.4v3.5h-1.4zM156.8 621.0h1.4v-3.5h-1.4zM168.8 25.0h1.4v3.5h-1.4zM168.8 621.0h1.4v-3.5h-1.4zM180.8 25.0h1.4v6.0h-1.4zM180.8 621.0h1.4v-6.0h-1.4zM192.8 25.0h1.4v3.5h-1.4zM192.8 621.0h1.4v-3.5h-1.4zM204.8 25.0h1.4v3.5h-1.4zM204.8 621.0h1.4v-3.5h-1.4zM216.8 25.0h1.4v3.5h-1.4zM216.8 621.0h1.4v-3.5h-1.4zM228.8 25.0h1.4v3.5h-1.4zM228.8 621.0h1.4v-3.5h-1.4zM240.8 25.0h1.4v6.0h-1.4zM240.8 621.0h1.4v-6.0h-1.4zM252.8 25.0h1.4v3.5h-1.4zM252.8 621.0h1.4v-3.5h-1.4zM264.8 25.0h1.4v3.5h-1.4zM264.8 621.0h1.4v-3.5h-1.4zM276.8 25.0h1.4v3.5h-1.4zM276.8 621.0h1.4v-3.5h-1.4zM288.8 25.0h1.4v3.5h-1.4zM288.8 621.0h1.4v-3.5h-1.4zM300.8 25.0h1.4v6.0h-1.4zM300.8 621.0h1.4v-6.0h-1.4zM312.8 25.0h1.4v3.5h-1.4zM312.8 621.0h1.4v-3.5h-1.4zM324.8 25.0h1.4v3.5h-1.4zM324.8 621.0h1.4v-3.5h-1.4zM336.8 25.0h1.4v3.5h-1.4zM336.8 621.0h1.4v-3.5h-1.4zM348.8 25.0h1.4v3.5h-1.4zM348.8 621.0h1.4v-3.5h-1.4zM360.8 25.0h1.4v6.0h-1.4zM360.8 621.0h1.4v-6.0h-1.4zM372.8 25.0h1.4v3.5h-1.4zM372.8 621.0h1.4v-3.5h-1.4zM384.8 25.0h1.4v3.5h-1.4zM384.8 621.0h1.4v-3.5h-1.4zM396.8 25.0h1.4v3.5h-1.4zM396.8 621.0h1.4v-3.5h-1.4zM408.8 25.0h1.4v3.5h-1.4zM408.8 621.0h1.4v-3.5h-1.4zM420.8 25.0h1.4v6.0h-1.4zM420.8 621.0h1.4v-6.0h-1.4zM432.8 25.0h1.4v3.5h-1.4zM432.8 621.0h1.4v-3.5h-1.4zM444.8 25.0h1.4v3.5h-1.4zM444.8 621.0h1.4v-3.5h-1.4zM456.8 25.0h1.4v3.5h-1.4zM456.8 621.0h1.4v-3.5h-1.4zM468.8 25.0h1.4v3.5h-1.4zM468.8 621.0h1.4v-3.5h-1.4zM480.8 25.0h1.4v7.0h-1.4zM480.8 621.0h1.4v-7.0h-1.4zM492.8 25.0h1.4v3.5h-1.4zM492.8 621.0h1.4v-3.5h-1.4zM504.8 25.0h1.4v3.5h-1.4zM504.8 621.0h1.4v-3.5h-1.4zM516.8 25.0h1.4v3.5h-1.4zM516.8 621.0h1.4v-3.5h-1.4zM528.8 25.0h1.4v3.5h-1.4zM528.8 621.0h1.4v-3.5h-1.4zM540.8 25.0h1.4v6.0h-1.4zM540.8 621.0h1.4v-6.0h-1.4zM552.8 25.0h1.4v3.5h-1.4zM552.8 621.0h1.4v-3.5h-1.4zM564.8 25.0h1.4v3.5h-1.4zM564.8 621.0h1.4v-3.5h-1.4zM576.8 25.0h1.4v3.5h-1.4zM576.8 621.0h1.4v-3.5h-1.4zM588.8 25.0h1.4v3.5h-1.4zM588.8 621.0h1.4v-3.5h-1.4zM600.8 25.0h1.4v6.0h-1.4zM600.8 621.0h1.4v-6.0h-1.4zM612.8 25.0h1.4v3.5h-1.4zM612.8 621.0h1.4v-3.5h-1.4zM624.8 25.0h1.4v3.5h-1.4zM624.8 621.0h1.4v-3.5h-1.4zM636.8 25.0h1.4v3.5h-1.4zM636.8 621.0h1.4v-3.5h-1.4zM648.8 25.0h1.4v3.5h-1.4zM648.8 621.0h1.4v-3.5h-1.4zM660.8 25.0h1.4v6.0h-1.4zM660.8 621.0h1.4v-6.0h-1.4zM672.8 25.0h1.4v3.5h-1.4zM672.8 621.0h1.4v-3.5h-1.4zM684.8 25.0h1.4v3.5h-1.4zM684.8 621.0h1.4v-3.5h-1.4zM696.8 25.0h1.4v3.5h-1.4zM696.8 621.0h1.4v-3.5h-1.4zM708.8 25.0h1.4v3.5h-1.4zM708.8 621.0h1.4v-3.5h-1.4zM720.8 25.0h1.4v6.0h-1.4zM720.8 621.0h1.4v-6.0h-1.4zM732.8 25.0h1.4v3.5h-1.4zM732.8 621.0h1.4v-3.5h-1.4zM744.8 25.0h1.4v3.5h-1.4zM744.8 621.0h1.4v-3.5h-1.4zM756.8 25.0h1.4v3.5h-1.4zM756.8 621.0h1.4v-3.5h-1.4zM768.8 25.0h1.4v3.5h-1.4zM768.8 621.0h1.4v-3.5h-1.4zM780.8 25.0h1.4v6.0h-1.4zM780.8 621.0h1.4v-6.0h-1.4zM792.8 25.0h1.4v3.5h-1.4zM792.8 621.0h1.4v-3.5h-1.4zM804.8 25.0h1.4v3.5h-1.4zM804.8 621.0h1.4v-3.5h-1.4zM816.8 25.0h1.4v3.5h-1.4zM816.8 621.0h1.4v-3.5h-1.4zM828.8 25.0h1.4v3.5h-1.4zM828.8 621.0h1.4v-3.5h-1.4zM840.8 25.0h1.4v6.0h-1.4zM840.8 621.0h1.4v-6.0h-1.4zM852.8 25.0h1.4v3.5h-1.4zM852.8 621.0h1.4v-3.5h-1.4zM864.8 25.0h1.4v3.5h-1.4zM864.8 621.0h1.4v-3.5h-1.4zM876.8 25.0h1.4v3.5h-1.4zM876.8 621.0h1.4v-3.5h-1.4zM888.8 25.0h1.4v3.5h-1.4zM888.8 621.0h1.4v-3.5h-1.4zM900.8 25.0h1.4v6.0h-1.4zM900.8 621.0h1.4v-6.0h-1.4zM912.8 25.0h1.4v3.5h-1.4zM912.8 621.0h1.4v-3.5h-1.4zM924.8 25.0h1.4v3.5h-1.4zM924.8 621.0h1.4v-3.5h-1.4zM26.0 34.6v1.4h3.5v-1.4zM934.0 34.6v1.4h-3.5v-1.4zM26.0 46.6v1.4h3.5v-1.4zM934.0 46.6v1.4h-3.5v-1.4zM26.0 58.6v1.4h3.5v-1.4zM934.0 58.6v1.4h-3.5v-1.4zM26.0 70.6v1.4h3.5v-1.4zM934.0 70.6v1.4h-3.5v-1.4zM26.0 82.6v1.4h6.0v-1.4zM934.0 82.6v1.4h-6.0v-1.4zM26.0 94.6v1.4h3.5v-1.4zM934.0 94.6v1.4h-3.5v-1.4zM26.0 106.6v1.4h3.5v-1.4zM934.0 106.6v1.4h-3.5v-1.4zM26.0 118.6v1.4h3.5v-1.4zM934.0 118.6v1.4h-3.5v-1.4zM26.0 130.6v1.4h3.5v-1.4zM934.0 130.6v1.4h-3.5v-1.4zM26.0 142.6v1.4h6.0v-1.4zM934.0 142.6v1.4h-6.0v-1.4zM26.0 154.6v1.4h3.5v-1.4zM934.0 154.6v1.4h-3.5v-1.4zM26.0 166.6v1.4h3.5v-1.4zM934.0 166.6v1.4h-3.5v-1.4zM26.0 178.6v1.4h3.5v-1.4zM934.0 178.6v1.4h-3.5v-1.4zM26.0 190.6v1.4h3.5v-1.4zM934.0 190.6v1.4h-3.5v-1.4zM26.0 202.6v1.4h6.0v-1.4zM934.0 202.6v1.4h-6.0v-1.4zM26.0 214.6v1.4h3.5v-1.4zM934.0 214.6v1.4h-3.5v-1.4zM26.0 226.6v1.4h3.5v-1.4zM934.0 226.6v1.4h-3.5v-1.4zM26.0 238.6v1.4h3.5v-1.4zM934.0 238.6v1.4h-3.5v-1.4zM26.0 250.6v1.4h3.5v-1.4zM934.0 250.6v1.4h-3.5v-1.4zM26.0 262.6v1.4h6.0v-1.4zM934.0 262.6v1.4h-6.0v-1.4zM26.0 274.6v1.4h3.5v-1.4zM934.0 274.6v1.4h-3.5v-1.4zM26.0 286.6v1.4h3.5v-1.4zM934.0 286.6v1.4h-3.5v-1.4zM26.0 298.6v1.4h3.5v-1.4zM934.0 298.6v1.4h-3.5v-1.4zM26.0 310.6v1.4h3.5v-1.4zM934.0 310.6v1.4h-3.5v-1.4zM26.0 322.6v1.4h7.0v-1.4zM934.0 322.6v1.4h-7.0v-1.4zM26.0 334.6v1.4h3.5v-1.4zM934.0 334.6v1.4h-3.5v-1.4zM26.0 346.6v1.4h3.5v-1.4zM934.0 346.6v1.4h-3.5v-1.4zM26.0 358.6v1.4h3.5v-1.4zM934.0 358.6v1.4h-3.5v-1.4zM26.0 370.6v1.4h3.5v-1.4zM934.0 370.6v1.4h-3.5v-1.4zM26.0 382.6v1.4h6.0v-1.4zM934.0 382.6v1.4h-6.0v-1.4zM26.0 394.6v1.4h3.5v-1.4zM934.0 394.6v1.4h-3.5v-1.4zM26.0 406.6v1.4h3.5v-1.4zM934.0 406.6v1.4h-3.5v-1.4zM26.0 418.6v1.4h3.5v-1.4zM934.0 418.6v1.4h-3.5v-1.4zM26.0 430.6v1.4h3.5v-1.4zM934.0 430.6v1.4h-3.5v-1.4zM26.0 442.6v1.4h6.0v-1.4zM934.0 442.6v1.4h-6.0v-1.4zM26.0 454.6v1.4h3.5v-1.4zM934.0 454.6v1.4h-3.5v-1.4zM26.0 466.6v1.4h3.5v-1.4zM934.0 466.6v1.4h-3.5v-1.4zM26.0 478.6v1.4h3.5v-1.4zM934.0 478.6v1.4h-3.5v-1.4zM26.0 490.6v1.4h3.5v-1.4zM934.0 490.6v1.4h-3.5v-1.4zM26.0 502.6v1.4h6.0v-1.4zM934.0 502.6v1.4h-6.0v-1.4zM26.0 514.6v1.4h3.5v-1.4zM934.0 514.6v1.4h-3.5v-1.4zM26.0 526.6v1.4h3.5v-1.4zM934.0 526.6v1.4h-3.5v-1.4zM26.0 538.6v1.4h3.5v-1.4zM934.0 538.6v1.4h-3.5v-1.4zM26.0 550.6v1.4h3.5v-1.4zM934.0 550.6v1.4h-3.5v-1.4zM26.0 562.6v1.4h6.0v-1.4zM934.0 562.6v1.4h-6.0v-1.4zM26.0 574.6v1.4h3.5v-1.4zM934.0 574.6v1.4h-3.5v-1.4zM26.0 586.6v1.4h3.5v-1.4zM934.0 586.6v1.4h-3.5v-1.4zM26.0 598.6v1.4h3.5v-1.4zM934.0 598.6v1.4h-3.5v-1.4zM26.0 610.6v1.4h3.5v-1.4zM934.0 610.6v1.4h-3.5v-1.4z" fill="#e8e8e8"/>
<path d="M26 322.8H26V322.8H27V322.8H28V322.8H29V322.8H30V322.8H31V322.8H32V322.8H33V322.8H34V322.8H35V322.8H36V322.8H37V322.8H38V320.8H39V322.8H40V322.8H41V322.8H42V322.8H43V322.8H44V321.8H45V322.8H46V322.8H47V322.8H48V320.8H49V322.8H50V322.8H51V321.8H52V322.8H53V322.8H54V321.8H55V322.8H56V322.8H57V322.8H58V321.8H59V321.8H60V322.8H61V322.8H62V322.8H63V322.8H64V322.8H65V322.8H66V322.8H67V320.8H68V322.8H69V320.8H70V322.8H71V321.8H72V322.8H73V321.8H74V322.8H75V322.8H76V322.8H77V322.8H78V322.8H79V321.8H80V321.8H81V321.8H82V322.8H83V322.8H84V320.8H85V320.8H86V320.8H87V322.8H88V322.8H89V320.8H90V322.8H91V322.8H92V322.8H93V322.8H94V322.8H95V322.8H96V322.8H97V321.8H98V322.8H99V321.8H100V322.8H101V321.8H102V322.8H103V321.8H104V322.8H105V322.8H106V322.8H107V322.8H108V322.8H109V322.8H110V322.8H111V322.8H112V322.8H113V322.8H114V320.8H115V320.8H116V321.8H117V322.8H118V321.8H119V322.8H120V320.8H121V322.8H122V322.8H123V322.8H124V320.8H125V321.8H126V320.8H127V321.8H128V322.8H129V322.8H130V322.8H131V322.8H132V322.8H133V322.8H134V322.8H135V322.8H136V322.8H137V322.8H138V322.8H139V322.8H140V321.8H141V322.8H142V322.8H143V322.8H144V322.8H145V322.8H146V322.8H147V322.8H148V322.8H149V322.8H150V322.8H151V322.8H152V322.8H153V322.8H154V322.8H155V322.8H156V322.8H157V322.8H158V322.8H159V322.8H160V322.8H161V322.8H162V322.8H163V322.8H164V320.8H165V322.8H166V322.8H167V322.8H168V322.8H169V322.8H170V322.8H171V322.8H172V322.8H173V321.8H174V322.8H175V322.8H176V322.8H177V322.8H178V322.8H179V320.8H180V320.8H181V322.8H182V322.8H183V322.8H184V322.8H185V322.8H186V322.8H187V322.8H188V320.8H189V322.8H190V322.8H191V322.8H192V322.8H193V322.8H194V322.8H195V321.8H196V322.8H197V322.8H198V322.8H199V322.8H200V322.8H201V322.8H202V322.8H203V321.8H204V322.8H205V320.8H206V321.8H207V320.8H208V322.8H209V322.8H210V320.8H211V322.8H212V322.8H213V320.8H214V322.8H215V322.8H216V321.8H217V322.8H218V321.8H219V322.8H220V322.8H221V322.8H222V322.8H223V322.8H224V322.8H225V322.8H226V322.8H227V322.8H228V322.8H229V322.8H230V320.8H231V322.8H232V322.8H233V322.8H234V322.8H235V322.8H236V321.8H237V322.8H238V322.8H239V322.8H240V322.8H241V322.8H242V320.8H243V322.8H244V322.8H245V322.8H246V320.8H247V325.3H247V325.3H246V325.3H245V325.3H244V327.3H243V325.3H242V325.3H241V325.3H240V327.3H239V326.8H238V325.3H237V326.8H236V325.3H235V325.3H234V326.8H233V325.3H232V326.8H231V326.3H230V325.3H229V325.3H228V325.3H227V326.8H226V326.8H225V326.3H224V325.3H223V326.8H222V325.3H221V326.3H220V326.8H219V326.8H218V325.3H217V326.8H216V325.3H215V325.3H214V325.3H213V325.3H212V325.3H211V327.3H210V327.3H209V327.3H208V325.3H207V327.3H206V325.3H205V327.3H204V325.3H203V327.3H202V325.3H201V325.3H200V325.3H199V325.3H198V327.3H197V325.3H196V325.3H195V325.3H194V325.3H193V325.3H192V327.3H191V326.3H190V325.3H189V325.3H188V326.8H187V325.3H186V326.3H185V325.3H184V325.3H183V325.3H182V325.3H181V325.3H180V325.3H179V327.3H178V326.3H177V326.3H176V325.3H175V326.3H174V325.3H173V325.3H172V325.3H171V325.3H170V325.3H169V325.3H168V325.3H167V326.8H166V326.3H165V325.3H164V327.3H163V327.3H162V325.3H161V325.3H160V326.3H159V327.3H158V325.3H157V325.3H156V325.3H155V325.3H154V326.8H153V327.3H152V325.3H151V325.3H150V325.3H149V325.3H148V325.3H147V325.3H146V326.8H145V325.3H144V325.3H143V325.3H142V325.3H141V325.3H140V326.3H139V325.3H138V325.3H137V326.8H136V325.3H135V326.8H134V327.3H133V325.3H132V325.3H131V325.3H130V325.3H129V326.8H128V325.3H127V325.3H126V327.3H125V325.3H124V327.3H123V327.3H122V325.3H121V325.3H120V327.3H119V325.3H118V325.3H117V325.3H116V325.3H115V326.8H114V326.3H113V326.8H112V325.3H111V325.3H110V325.3H109V325.3H108V325.3H107V327.3H106V325.3H105V325.3H104V326.8H103V325.3H102V325.3H101V326.8H100V326.3H99V327.3H98V325.3H97V325.3H96V326.3H95V326.3H94V327.3H93V325.3H92V325.3H91V325.3H90V326.3H89V326.3H88V325.3H87V325.3H86V326.3H85V325.3H84V327.3H83V325.3H82V325.3H81V327.3H80V325.3H79V326.3H78V326.8H77V325.3H76V325.3H75V325.3H74V325.3H73V325.3H72V326.8H71V326.8H70V326.8H69V325.3H68V326.3H67V325.3H66V325.3H65V325.3H64V325.3H63V325.3H62V326.3H61V326.8H60V326.8H59V325.3H58V326.8H57V325.3H56V327.3H55V326.3H54V326.3H53V327.3H52V325.3H51V325.3H50V327.3H49V326.3H48V325.3H47V325.3H46V326.8H45V325.3H44V327.3H43V325.3H42V325.3H41V327.3H40V327.3H39V325.3H38V326.3H37V325.3H36V325.3H35V325.3H34V325.3H33V325.3H32V326.8H31V325.3H30V325.3H29V325.3H28V325.3H27V325.3H26ZM737 322.8H737V322.8H738V322.8H739V322.8H740V322.8H741V322.8H742V322.8H743V322.8H744V322.8H745V322.8H746V322.8H747V321.8H748V322.8H749V321.8H750V322.8H751V320.8H752V322.8H753V322.8H754V322.8H755V320.8H756V322.8H757V320.8H758V322.8H759V322.8H760V322.8H761V321.8H762V322.8H763V322.8H764V321.8H765V322.8H766V322.8H767V322.8H768V322.8H769V322.8H770V322.8H771V322.8H772V321.8H773V322.8H774V322.8H775V322.8H776V322.8H777V322.8H778V322.8H779V322.8H780V322.8H781V322.8H782V320.8H783V322.8H784V322.8H785V322.8H786V322.8H787V322.8H788V322.8H789V322.8H790V321.8H791V320.8H792V322.8H793V322.8H794V322.8H795V322.8H796V322.8H797V322.8H798V322.8H799V322.8H800V322.8H801V322.8H802V321.8H803V322.8H804V322.8H805V322.8H806V322.8H807V321.8H808V320.8H809V322.8H810V322.8H811V320.8H812V322.8H813V322.8H814V322.8H815V321.8H816V322.8H817V322.8H818V322.8H819V322.8H820V322.8H821V322.8H822V322.8H823V322.8H824V322.8H825V322.8H826V322.8H827V322.8H828V322.8H829V322.8H830V322.8H831V320.8H832V322.8H833V322.8H834V322.8H835V322.8H836V322.8H837V322.8H838V322.8H839V322.8H840V320.8H841V322.8H842V320.8H843V322.8H844V322.8H845V322.8H846V322.8H847V322.8H848V322.8H849V322.8H850V322.8H851V322.8H852V322.8H853V322.8H854V322.8H855V322.8H856V322.8H857V322.8H858V322.8H859V322.8H860V322.8H861V322.8H862V322.8H863V322.8H864V320.8H865V322.8H866V322.8H867V320.8H868V322.8H869V320.8H870V322.8H871V322.8H872V320.8H873V322.8H874V321.8H875V321.8H876V322.8H877V322.8H878V322.8H879V320.8H880V322.8H881V320.8H882V320.8H883V322.8H884V322.8H885V322.8H886V322.8H887V322.8H888V321.8H889V320.8H890V322.8H891V322.8H892V322.8H893V322.8H894V322.8H895V320.8H896V321.8H897V320.8H898V322.8H899V322.8H900V322.8H901V322.8H902V320.8H903V322.8H904V322.8H905V322.8H906V322.8H907V322.8H908V322.8H909V322.8H910V320.8H911V322.8H912V322.8H913V322.8H914V322.8H915V322.8H916V322.8H917V322.8H918V320.8H919V322.8H920V322.8H921V322.8H922V322.8H923V320.8H924V322.8H925V322.8H926V322.8H927V320.8H928V322.8H929V321.8H930V322.8H931V322.8H932V322.8H933V320.8H934V326.8H934V326.8H933V325.3H932V325.3H931V325.3H930V325.3H929V327.3H928V325.3H927V325.3H926V325.3H925V325.3H924V325.3H923V325.3H922V325.3H921V325.3H920V325.3H919V327.3H918V326.3H917V325.3H916V325.3H915V327.3H914V325.3H913V327.3H912V325.3H911V325.3H910V325.3H909V325.3H908V325.3H907V325.3H906V326.8H905V325.3H904V325.3H903V325.3H902V325.3H901V327.3H900V326.3H899V326.8H898V326.8H897V325.3H896V325.3H895V325.3H894V326.3H893V326.8H892V325.3H891V325.3H890V327.3H889V325.3H888V326.3H887V326.3H886V325.3H885V325.3H884V325.3H883V326.8H882V325.3H881V325.3H880V325.3H879V325.3H878V326.3H877V325.3H876V325.3H875V325.3H874V325.3H873V327.3H872V326.3H871V325.3H870V325.3H869V326.8H868V325.3H867V325.3H866V325.3H865V325.3H864V325.3H863V327.3H862V325.3H861V326.8H860V327.3H859V325.3H858V326.8H857V325.3H856V326.3H855V326.3H854V325.3H853V325.3H852V326.3H851V325.3H850V326.8H849V326.8H848V326.3H847V326.8H846V325.3H845V325.3H844V326.8H843V325.3H842V325.3H841V327.3H840V325.3H839V325.3H838V326.8H837V325.3H836V325.3H835V326.3H834V325.3H833V325.3H832V325.3H831V325.3H830V325.3H829V325.3H828V327.3H827V325.3H826V327.3H825V325.3H824V325.3H823V325.3H822V325.3H821V327.3H820V325.3H819V325.3H818V325.3H817V326.8H816V325.3H815V326.8H814V325.3H813V325.3H812V326.3H811V325.3H810V325.3H809V325.3H808V326.3H807V326.3H806V325.3H805V327.3H804V326.8H803V327.3H802V325.3H801V325.3H800V326.3H799V326.3H798V326.3H797V325.3H796V327.3H795V325.3H794V326.8H793V326.3H792V327.3H791V325.3H790V325.3H789V326.3H788V325.3H787V325.3H786V325.3H785V327.3H784V326.8H783V327.3H782V325.3H781V325.3H780V327.3H779V325.3H778V325.3H777V325.3H776V325.3H775V325.3H774V325.3H773V325.3H772V325.3H771V327.3H770V325.3H769V326.8H768V326.3H767V325.3H766V325.3H765V326.8H764V325.3H763V326.8H762V325.3H761V326.3H760V325.3H759V325.3H758V325.3H757V325.3H756V326.8H755V325.3H754V325.3H753V325.3H752V325.3H751V325.3H750V325.3H749V326.8H748V327.3H747V325.3H746V325.3H745V326.8H744V325.3H743V325.3H742V327.3H741V325.3H740V326.8H739V325.3H738V326.3H737ZM264 85.0H264V85.0H265V84.0H266V85.0H267V85.0H268V85.0H269V85.0H270V84.0H271V84.0H272V85.0H273V85.0H274V85.0H275V82.0H276V85.0H277V85.0H278V82.0H279V85.0H280V85.0H281V85.0H282V85.0H283V82.0H284V84.0H285V85.0H286V85.0H287V85.0H288V85.0H289V85.0H290V85.0H291V85.0H292V85.0H293V85.0H294V85.0H295V82.0H296V85.0H297V85.0H298V84.0H299V85.0H300V82.0H301V85.0H302V85.0H303V85.0H304V85.0H305V85.0H306V85.0H307V85.0H308V85.0H309V85.0H310V85.0H311V85.0H312V84.0H313V85.0H314V85.0H315V85.0H316V85.0H317V85.0H318V84.0H319V85.0H320V84.0H321V82.0H322V85.0H323V84.0H324V85.0H325V85.0H326V85.0H327V85.0H328V85.0H329V85.0H330V85.0H331V85.0H332V85.0H333V85.0H334V85.0H335V85.0H336V85.0H337V85.0H338V97.0H338V97.0H337V97.0H336V97.0H335V94.0H334V97.0H333V97.0H332V97.0H331V97.0H330V95.0H329V95.0H328V97.0H327V95.0H326V97.0H325V95.0H324V97.0H323V95.0H322V96.0H321V97.0H320V97.0H319V97.0H318V97.0H317V97.0H316V95.0H315V95.0H314V97.0H313V95.0H312V94.0H311V95.0H310V97.0H309V94.0H308V96.0H307V96.0H306V97.0H305V97.0H304V94.0H303V96.0H302V97.0H301V95.0H300V96.0H299V97.0H298V97.0H297V94.0H296V94.0H295V94.0H294V95.0H293V97.0H292V97.0H291V97.0H290V97.0H289V97.0H288V94.0H287V97.0H286V97.0H285V94.0H284V97.0H283V94.0H282V95.0H281V95.0H280V97.0H279V97.0H278V97.0H277V97.0H276V96.0H275V96.0H274V94.0H273V95.0H272V94.0H271V97.0H270V97.0H269V97.0H268V95.0H267V94.0H266V97.0H265V97.0H264ZM367 178.5H367V178.5H368V179.5H369V179.5H370V179.5H371V178.5H372V178.5H373V179.5H374V177.5H375V179.5H376V179.5H377V179.5H378V177.5H379V176.5H380V179.5H381V179.5H382V176.5H383V179.5H384V177.5H385V176.5H386V176.5H387V177.5H388V178.5H389V179.5H390V178.5H391V179.5H392V178.5H393V179.5H394V178.5H395V177.5H396V179.5H397V177.5H398V179.5H399V179.5H400V179.5H401V178.5H402V179.5H403V179.5H404V179.5H405V177.5H406V179.5H407V178.5H408V179.5H409V179.5H410V179.5H411V179.5H412V179.5H413V179.5H414V176.5H415V176.5H416V177.5H417V177.5H418V179.5H419V179.5H420V176.5H421V177.5H422V179.5H423V176.5H424V179.5H425V179.5H426V178.5H427V179.5H428V179.5H429V179.5H430V179.5H431V178.5H432V179.5H433V177.5H434V178.5H435V179.5H436V179.5H437V178.5H438V176.5H439V177.5H440V179.5H441V179.5H442V178.5H443V178.5H444V179.5H445V177.5H446V179.5H447V179.5H448V179.5H449V178.5H450V179.5H451V176.5H452V179.5H453V179.5H454V179.5H455V179.5H456V177.5H457V178.5H458V178.5H459V177.5H460V179.5H461V179.5H462V179.5H463V177.5H464V179.5H465V179.5H466V179.5H467V177.5H468V179.5H469V179.5H470V179.5H471V177.5H472V179.5H473V179.5H474V179.5H475V177.5H476V179.5H477V179.5H478V179.5H479V178.5H480V178.5H481V177.5H482V179.5H483V178.5H484V179.5H485V179.5H486V176.5H487V178.5H488V179.5H489V177.5H490V179.5H491V176.5H492V179.5H493V176.5H494V177.5H495V179.5H496V179.5H497V179.5H498V179.5H499V179.5H500V177.5H501V179.5H502V179.5H503V179.5H504V179.5H505V178.5H506V179.5H507V179.5H508V178.5H509V179.5H510V177.5H511V178.5H512V179.5H513V179.5H514V177.5H515V179.5H516V179.5H517V179.5H518V179.5H519V179.5H520V179.5H521V177.5H522V179.5H523V178.5H524V177.5H525V177.5H526V179.5H527V179.5H528V179.5H529V177.5H530V179.5H531V179.5H532V177.5H533V179.5H534V179.5H535V176.5H536V179.5H537V178.5H538V179.5H539V179.5H540V177.5H541V177.5H542V179.5H543V176.5H544V179.5H545V179.5H546V179.5H547V178.5H548V179.5H549V179.5H550V176.5H551V177.5H552V179.5H553V179.5H554V179.5H555V179.5H556V179.5H557V177.5H558V179.5H559V179.5H560V179.5H561V176.5H562V179.5H563V179.5H564V179.5H565V179.5H566V179.5H567V179.5H568V179.5H569V179.5H570V179.5H571V177.5H572V179.5H573V179.5H574V179.5H575V176.5H576V179.5H577V179.5H578V177.5H579V179.5H580V179.5H581V177.5H582V179.5H583V179.5H584V179.5H585V179.5H586V178.5H587V179.5H588V178.5H589V178.5H590V176.5H591V176.5H592V179.5H593V179.5H594V179.5H595V179.5H596V179.5H597V177.5H598V179.5H599V176.5H600V179.5H601V178.5H602V179.5H603V179.5H604V179.5H605V177.5H606V179.5H607V178.5H608V179.5H609V177.5H610V179.5H611V176.5H612V177.5H613V179.5H614V179.5H615V179.5H616V179.5H617V177.5H618V179.5H619V179.5H620V179.5H621V176.5H622V179.5H623V179.5H624V179.5H625V179.5H626V179.5H627V179.5H628V176.5H629V178.5H630V179.5H631V177.5H632V179.5H633V178.5H634V179.5H635V177.5H636V176.5H637V178.5H638V179.5H639V179.5H640V178.5H641V179.5H642V179.5H643V176.5H644V177.5H645V179.5H646V179.5H647V178.5H648V176.5H649V178.5H650V177.5H651V179.5H652V179.5H653V176.5H654V179.5H655V179.5H656V176.5H657V179.5H658V179.5H659V179.5H660V176.5H661V178.5H662V179.5H663V177.5H664V179.5H665V179.5H666V179.5H667V179.5H668V178.5H669V179.5H670V179.5H671V179.5H672V179.5H673V177.5H674V179.5H675V179.5H676V179.5H677V179.5H678V179.5H679V179.5H680V177.5H681V178.5H682V179.5H683V179.5H684V179.5H685V178.5H686V179.5H687V179.5H688V179.5H689V179.5H690V176.5H691V179.5H692V179.5H693V179.5H694V179.5H695V179.5H696V179.5H697V177.5H698V179.5H699V178.5H700V179.5H701V179.5H702V179.5H703V176.5H704V176.5H705V179.5H706V178.5H707V179.5H708V179.5H709V179.5H710V179.5H711V179.5H712V179.5H713V179.5H714V179.5H715V179.5H716V179.5H717V178.5H718V179.5H719V179.5H720V179.5H721V179.5H722V179.5H723V179.5H724V179.5H725V179.5H726V178.5H727V179.5H728V179.5H729V179.5H730V179.5H731V178.5H732V176.5H733V178.5H734V176.5H735V179.5H736V177.5H737V183.5H737V183.5H736V184.0H735V184.0H734V184.0H733V183.5H732V183.5H731V183.5H730V183.5H729V183.5H728V183.5H727V183.5H726V184.0H725V183.5H724V183.5H723V184.0H722V184.0H721V183.5H720V183.5H719V184.0H718V183.5H717V183.5H716V183.5H715V184.0H714V184.0H713V183.5H712V183.5H711V183.5H710V183.5H709V183.5H708V183.5H707V183.5H706V183.5H705V183.5H704V183.5H703V184.0H702V184.0H701V184.0H700V184.0H699V183.5H698V183.5H697V183.5H696V183.5H695V183.5H694V183.5H693V183.5H692V184.0H691V183.5H690V184.0H689V184.0H688V183.5H687V184.0H686V183.5H685V183.5H684V183.5H683V184.0H682V183.5H681V183.5H680V184.0H679V183.5H678V183.5H677V183.5H676V184.0H675V183.5H674V184.0H673V183.5H672V183.5H671V183.5H670V183.5H669V183.5H668V184.0H667V183.5H666V183.5H665V184.0H664V183.5H663V183.5H662V183.5H661V183.5H660V183.5H659V183.5H658V183.5H657V183.5H656V183.5H655V183.5H654V183.5H653V183.5H652V183.5H651V183.5H650V184.0H649V183.5H648V183.5H647V183.5H646V184.0H645V183.5H644V184.0H643V183.5H642V183.5H641V183.5H640V183.5H639V183.5H638V184.0H637V183.5H636V183.5H635V184.0H634V184.0H633V183.5H632V184.0H631V183.5H630V183.5H629V183.5H628V183.5H627V183.5H626V183.5H625V183.5H624V184.0H623V183.5H622V184.0H621V184.0H620V183.5H619V183.5H618V183.5H617V183.5H616V183.5H615V184.0H614V183.5H613V183.5H612V183.5H611V183.5H610V183.5H609V183.5H608V183.5H607V183.5H606V183.5H605V183.5H604V183.5H603V183.5H602V183.5H601V183.5H600V183.5H599V183.5H598V183.5H597V184.0H596V183.5H595V183.5H594V183.5H593V184.0H592V183.5H591V183.5H590V183.5H589V183.5H588V183.5H587V183.5H586V183.5H585V184.0H584V183.5H583V183.5H582V183.5H581V183.5H580V183.5H579V183.5H578V184.0H577V183.5H576V183.5H575V183.5H574V183.5H573V183.5H572V183.5H571V183.5H570V184.0H569V183.5H568V184.0H567V183.5H566V183.5H565V183.5H564V184.0H563V184.0H562V183.5H561V184.0H560V183.5H559V183.5H558V183.5H557V183.5H556V183.5H555V183.5H554V184.0H553V183.5H552V183.5H551V183.5H550V183.5H549V183.5H548V183.5H547V183.5H546V184.0H545V183.5H544V184.0H543V183.5H542V184.0H541V183.5H540V183.5H539V183.5H538V183.5H537V183.5H536V183.5H535V183.5H534V183.5H533V183.5H532V183.5H531V183.5H530V183.5H529V183.5H528V183.5H527V184.0H526V183.5H525V184.0H524V183.5H523V183.5H522V183.5H521V183.5H520V183.5H519V184.0H518V183.5H517V183.5H516V183.5H515V183.5H514V184.0H513V183.5H512V183.5H511V184.0H510V183.5H509V183.5H508V183.5H507V183.5H506V183.5H505V183.5H504V183.5H503V183.5H502V183.5H501V183.5H500V183.5H499V183.5H498V184.0H497V183.5H496V183.5H495V183.5H494V183.5H493V183.5H492V183.5H491V184.0H490V183.5H489V183.5H488V183.5H487V183.5H486V184.0H485V183.5H484V183.5H483V183.5H482V183.5H481V184.0H480V183.5H479V183.5H478V183.5H477V183.5H476V184.0H475V183.5H474V183.5H473V184.0H472V183.5H471V183.5H470V183.5H469V183.5H468V183.5H467V183.5H466V183.5H465V184.0H464V183.5H463V183.5H462V183.5H461V184.0H460V183.5H459V183.5H458V183.5H457V183.5H456V184.0H455V184.0H454V183.5H453V184.0H452V183.5H451V183.5H450V183.5H449V183.5H448V184.0H447V183.5H446V183.5H445V183.5H444V183.5H443V184.0H442V183.5H441V183.5H440V183.5H439V183.5H438V183.5H437V183.5H436V183.5H435V183.5H434V183.5H433V183.5H432V183.5H431V183.5H430V184.0H429V183.5H428V183.5H427V184.0H426V184.0H425V184.0H424V183.5H423V184.0H422V183.5H421V183.5H420V184.0H419V184.0H418V183.5H417V183.5H416V183.5H415V183.5H414V183.5H413V184.0H412V183.5H411V183.5H410V183.5H409V183.5H408V183.5H407V183.5H406V184.0H405V183.5H404V183.5H403V184.0H402V183.5H401V183.5H400V183.5H399V184.0H398V183.5H397V183.5H396V183.5H395V183.5H394V183.5H393V183.5H392V183.5H391V184.0H390V183.5H389V183.5H388V183.5H387V183.5H386V183.5H385V183.5H384V183.5H383V183.5H382V183.5H381V184.0H380V183.5H379V183.5H378V184.0H377V184.0H376V183.5H375V184.0H374V183.5H373V184.0H372V183.5H371V183.5H370V183.5H369V184.0H368V184.0H367ZM354 176.3H368V183H367V179.2H354Z" fill="#f2f21e"/><path d="M246 324 L246.8 279 L250 230 L253 181 L258.4 120 L261 101 L264 92 M338 92 L339 100 L341.7 124 L344.4 151 L348 163 L351 170 L354 175 L356 177.5 M736.5 181 V324" fill="none" stroke="#f2f21e" stroke-width="2.2"/>
<rect x="26" y="90.00" width="908" height="1.3" fill="#4a0c58" opacity="0.9"/><path d="M26.0 90.00h5.5v1.3h-5.5zM33.0 90.00h5.5v1.3h-5.5zM40.0 90.00h5.5v1.3h-5.5zM47.0 90.00h5.5v1.3h-5.5zM54.0 90.00h5.5v1.3h-5.5zM61.0 90.00h5.5v1.3h-5.5zM68.0 90.00h5.5v1.3h-5.5zM75.0 90.00h5.5v1.3h-5.5zM82.0 90.00h5.5v1.3h-5.5zM89.0 90.00h5.5v1.3h-5.5zM96.0 90.00h5.5v1.3h-5.5zM103.0 90.00h5.5v1.3h-5.5zM110.0 90.00h5.5v1.3h-5.5zM117.0 90.00h5.5v1.3h-5.5zM124.0 90.00h5.5v1.3h-5.5zM131.0 90.00h5.5v1.3h-5.5zM138.0 90.00h5.5v1.3h-5.5zM145.0 90.00h5.5v1.3h-5.5zM152.0 90.00h5.5v1.3h-5.5zM159.0 90.00h5.5v1.3h-5.5zM166.0 90.00h5.5v1.3h-5.5zM173.0 90.00h5.5v1.3h-5.5zM180.0 90.00h5.5v1.3h-5.5zM187.0 90.00h5.5v1.3h-5.5zM194.0 90.00h5.5v1.3h-5.5zM201.0 90.00h5.5v1.3h-5.5zM208.0 90.00h5.5v1.3h-5.5zM215.0 90.00h5.5v1.3h-5.5zM222.0 90.00h5.5v1.3h-5.5zM229.0 90.00h5.5v1.3h-5.5zM236.0 90.00h5.5v1.3h-5.5zM243.0 90.00h5.5v1.3h-5.5zM250.0 90.00h5.5v1.3h-5.5zM257.0 90.00h5.5v1.3h-5.5zM264.0 90.00h5.5v1.3h-5.5zM271.0 90.00h5.5v1.3h-5.5zM278.0 90.00h5.5v1.3h-5.5zM285.0 90.00h5.5v1.3h-5.5zM292.0 90.00h5.5v1.3h-5.5zM299.0 90.00h5.5v1.3h-5.5zM306.0 90.00h5.5v1.3h-5.5zM313.0 90.00h5.5v1.3h-5.5zM320.0 90.00h5.5v1.3h-5.5zM327.0 90.00h5.5v1.3h-5.5zM334.0 90.00h5.5v1.3h-5.5zM341.0 90.00h5.5v1.3h-5.5zM348.0 90.00h5.5v1.3h-5.5zM355.0 90.00h5.5v1.3h-5.5zM362.0 90.00h5.5v1.3h-5.5zM369.0 90.00h5.5v1.3h-5.5zM376.0 90.00h5.5v1.3h-5.5zM383.0 90.00h5.5v1.3h-5.5zM390.0 90.00h5.5v1.3h-5.5zM397.0 90.00h5.5v1.3h-5.5zM404.0 90.00h5.5v1.3h-5.5zM411.0 90.00h5.5v1.3h-5.5zM418.0 90.00h5.5v1.3h-5.5zM425.0 90.00h5.5v1.3h-5.5zM432.0 90.00h5.5v1.3h-5.5zM439.0 90.00h5.5v1.3h-5.5zM446.0 90.00h5.5v1.3h-5.5zM453.0 90.00h5.5v1.3h-5.5zM460.0 90.00h5.5v1.3h-5.5zM467.0 90.00h5.5v1.3h-5.5zM474.0 90.00h5.5v1.3h-5.5zM481.0 90.00h5.5v1.3h-5.5zM488.0 90.00h5.5v1.3h-5.5zM495.0 90.00h5.5v1.3h-5.5zM502.0 90.00h5.5v1.3h-5.5zM509.0 90.00h5.5v1.3h-5.5zM516.0 90.00h5.5v1.3h-5.5zM523.0 90.00h5.5v1.3h-5.5zM530.0 90.00h5.5v1.3h-5.5zM537.0 90.00h5.5v1.3h-5.5zM544.0 90.00h5.5v1.3h-5.5zM551.0 90.00h5.5v1.3h-5.5zM558.0 90.00h5.5v1.3h-5.5zM565.0 90.00h5.5v1.3h-5.5zM572.0 90.00h5.5v1.3h-5.5zM579.0 90.00h5.5v1.3h-5.5zM586.0 90.00h5.5v1.3h-5.5zM593.0 90.00h5.5v1.3h-5.5zM600.0 90.00h5.5v1.3h-5.5zM607.0 90.00h5.5v1.3h-5.5zM614.0 90.00h5.5v1.3h-5.5zM621.0 90.00h5.5v1.3h-5.5zM628.0 90.00h5.5v1.3h-5.5zM635.0 90.00h5.5v1.3h-5.5zM642.0 90.00h5.5v1.3h-5.5zM649.0 90.00h5.5v1.3h-5.5zM656.0 90.00h5.5v1.3h-5.5zM663.0 90.00h5.5v1.3h-5.5zM670.0 90.00h5.5v1.3h-5.5zM677.0 90.00h5.5v1.3h-5.5zM684.0 90.00h5.5v1.3h-5.5zM691.0 90.00h5.5v1.3h-5.5zM698.0 90.00h5.5v1.3h-5.5zM705.0 90.00h5.5v1.3h-5.5zM712.0 90.00h5.5v1.3h-5.5zM719.0 90.00h5.5v1.3h-5.5zM726.0 90.00h5.5v1.3h-5.5zM733.0 90.00h5.5v1.3h-5.5zM740.0 90.00h5.5v1.3h-5.5zM747.0 90.00h5.5v1.3h-5.5zM754.0 90.00h5.5v1.3h-5.5zM761.0 90.00h5.5v1.3h-5.5zM768.0 90.00h5.5v1.3h-5.5zM775.0 90.00h5.5v1.3h-5.5zM782.0 90.00h5.5v1.3h-5.5zM789.0 90.00h5.5v1.3h-5.5zM796.0 90.00h5.5v1.3h-5.5zM803.0 90.00h5.5v1.3h-5.5zM810.0 90.00h5.5v1.3h-5.5zM817.0 90.00h5.5v1.3h-5.5zM824.0 90.00h5.5v1.3h-5.5zM831.0 90.00h5.5v1.3h-5.5zM838.0 90.00h5.5v1.3h-5.5zM845.0 90.00h5.5v1.3h-5.5zM852.0 90.00h5.5v1.3h-5.5zM859.0 90.00h5.5v1.3h-5.5zM866.0 90.00h5.5v1.3h-5.5zM873.0 90.00h5.5v1.3h-5.5zM880.0 90.00h5.5v1.3h-5.5zM887.0 90.00h5.5v1.3h-5.5zM894.0 90.00h5.5v1.3h-5.5zM901.0 90.00h5.5v1.3h-5.5zM908.0 90.00h5.5v1.3h-5.5zM915.0 90.00h5.5v1.3h-5.5zM922.0 90.00h5.5v1.3h-5.5zM929.0 90.00h5.0v1.3h-5.0z" fill="#9a24aa" opacity="0.9"/><rect x="26" y="178.00" width="908" height="1.3" fill="#4a0c58" opacity="0.9"/><path d="M26.0 178.00h5.5v1.3h-5.5zM33.0 178.00h5.5v1.3h-5.5zM40.0 178.00h5.5v1.3h-5.5zM47.0 178.00h5.5v1.3h-5.5zM54.0 178.00h5.5v1.3h-5.5zM61.0 178.00h5.5v1.3h-5.5zM68.0 178.00h5.5v1.3h-5.5zM75.0 178.00h5.5v1.3h-5.5zM82.0 178.00h5.5v1.3h-5.5zM89.0 178.00h5.5v1.3h-5.5zM96.0 178.00h5.5v1.3h-5.5zM103.0 178.00h5.5v1.3h-5.5zM110.0 178.00h5.5v1.3h-5.5zM117.0 178.00h5.5v1.3h-5.5zM124.0 178.00h5.5v1.3h-5.5zM131.0 178.00h5.5v1.3h-5.5zM138.0 178.00h5.5v1.3h-5.5zM145.0 178.00h5.5v1.3h-5.5zM152.0 178.00h5.5v1.3h-5.5zM159.0 178.00h5.5v1.3h-5.5zM166.0 178.00h5.5v1.3h-5.5zM173.0 178.00h5.5v1.3h-5.5zM180.0 178.00h5.5v1.3h-5.5zM187.0 178.00h5.5v1.3h-5.5zM194.0 178.00h5.5v1.3h-5.5zM201.0 178.00h5.5v1.3h-5.5zM208.0 178.00h5.5v1.3h-5.5zM215.0 178.00h5.5v1.3h-5.5zM222.0 178.00h5.5v1.3h-5.5zM229.0 178.00h5.5v1.3h-5.5zM236.0 178.00h5.5v1.3h-5.5zM243.0 178.00h5.5v1.3h-5.5zM250.0 178.00h5.5v1.3h-5.5zM257.0 178.00h5.5v1.3h-5.5zM264.0 178.00h5.5v1.3h-5.5zM271.0 178.00h5.5v1.3h-5.5zM278.0 178.00h5.5v1.3h-5.5zM285.0 178.00h5.5v1.3h-5.5zM292.0 178.00h5.5v1.3h-5.5zM299.0 178.00h5.5v1.3h-5.5zM306.0 178.00h5.5v1.3h-5.5zM313.0 178.00h5.5v1.3h-5.5zM320.0 178.00h5.5v1.3h-5.5zM327.0 178.00h5.5v1.3h-5.5zM334.0 178.00h5.5v1.3h-5.5zM341.0 178.00h5.5v1.3h-5.5zM348.0 178.00h5.5v1.3h-5.5zM355.0 178.00h5.5v1.3h-5.5zM362.0 178.00h5.5v1.3h-5.5zM369.0 178.00h5.5v1.3h-5.5zM376.0 178.00h5.5v1.3h-5.5zM383.0 178.00h5.5v1.3h-5.5zM390.0 178.00h5.5v1.3h-5.5zM397.0 178.00h5.5v1.3h-5.5zM404.0 178.00h5.5v1.3h-5.5zM411.0 178.00h5.5v1.3h-5.5zM418.0 178.00h5.5v1.3h-5.5zM425.0 178.00h5.5v1.3h-5.5zM432.0 178.00h5.5v1.3h-5.5zM439.0 178.00h5.5v1.3h-5.5zM446.0 178.00h5.5v1.3h-5.5zM453.0 178.00h5.5v1.3h-5.5zM460.0 178.00h5.5v1.3h-5.5zM467.0 178.00h5.5v1.3h-5.5zM474.0 178.00h5.5v1.3h-5.5zM481.0 178.00h5.5v1.3h-5.5zM488.0 178.00h5.5v1.3h-5.5zM495.0 178.00h5.5v1.3h-5.5zM502.0 178.00h5.5v1.3h-5.5zM509.0 178.00h5.5v1.3h-5.5zM516.0 178.00h5.5v1.3h-5.5zM523.0 178.00h5.5v1.3h-5.5zM530.0 178.00h5.5v1.3h-5.5zM537.0 178.00h5.5v1.3h-5.5zM544.0 178.00h5.5v1.3h-5.5zM551.0 178.00h5.5v1.3h-5.5zM558.0 178.00h5.5v1.3h-5.5zM565.0 178.00h5.5v1.3h-5.5zM572.0 178.00h5.5v1.3h-5.5zM579.0 178.00h5.5v1.3h-5.5zM586.0 178.00h5.5v1.3h-5.5zM593.0 178.00h5.5v1.3h-5.5zM600.0 178.00h5.5v1.3h-5.5zM607.0 178.00h5.5v1.3h-5.5zM614.0 178.00h5.5v1.3h-5.5zM621.0 178.00h5.5v1.3h-5.5zM628.0 178.00h5.5v1.3h-5.5zM635.0 178.00h5.5v1.3h-5.5zM642.0 178.00h5.5v1.3h-5.5zM649.0 178.00h5.5v1.3h-5.5zM656.0 178.00h5.5v1.3h-5.5zM663.0 178.00h5.5v1.3h-5.5zM670.0 178.00h5.5v1.3h-5.5zM677.0 178.00h5.5v1.3h-5.5zM684.0 178.00h5.5v1.3h-5.5zM691.0 178.00h5.5v1.3h-5.5zM698.0 178.00h5.5v1.3h-5.5zM705.0 178.00h5.5v1.3h-5.5zM712.0 178.00h5.5v1.3h-5.5zM719.0 178.00h5.5v1.3h-5.5zM726.0 178.00h5.5v1.3h-5.5zM733.0 178.00h5.5v1.3h-5.5zM740.0 178.00h5.5v1.3h-5.5zM747.0 178.00h5.5v1.3h-5.5zM754.0 178.00h5.5v1.3h-5.5zM761.0 178.00h5.5v1.3h-5.5zM768.0 178.00h5.5v1.3h-5.5zM775.0 178.00h5.5v1.3h-5.5zM782.0 178.00h5.5v1.3h-5.5zM789.0 178.00h5.5v1.3h-5.5zM796.0 178.00h5.5v1.3h-5.5zM803.0 178.00h5.5v1.3h-5.5zM810.0 178.00h5.5v1.3h-5.5zM817.0 178.00h5.5v1.3h-5.5zM824.0 178.00h5.5v1.3h-5.5zM831.0 178.00h5.5v1.3h-5.5zM838.0 178.00h5.5v1.3h-5.5zM845.0 178.00h5.5v1.3h-5.5zM852.0 178.00h5.5v1.3h-5.5zM859.0 178.00h5.5v1.3h-5.5zM866.0 178.00h5.5v1.3h-5.5zM873.0 178.00h5.5v1.3h-5.5zM880.0 178.00h5.5v1.3h-5.5zM887.0 178.00h5.5v1.3h-5.5zM894.0 178.00h5.5v1.3h-5.5zM901.0 178.00h5.5v1.3h-5.5zM908.0 178.00h5.5v1.3h-5.5zM915.0 178.00h5.5v1.3h-5.5zM922.0 178.00h5.5v1.3h-5.5zM929.0 178.00h5.0v1.3h-5.0z" fill="#9a24aa" opacity="0.9"/><rect x="264" y="90" width="74" height="1.5" fill="#f07838" opacity="0.85"/>
<g stroke="#f29a52" stroke-width="4.2" stroke-linecap="round" stroke-linejoin="round" fill="none"><path d="M128.1 179.0 V321.0"/><path d="M120.5 191.5 L128.1 178.5 L135.7 191.5"/><path d="M120.5 311.0 L128.1 322.5 L135.7 311.0"/></g><g stroke="#f29a52" stroke-width="4.2" stroke-linecap="round" stroke-linejoin="round" fill="none"><path d="M232.0 91.0 V321.0"/><path d="M224.4 103.5 L232.0 90.5 L239.6 103.5"/><path d="M224.4 311.0 L232.0 322.5 L239.6 311.0"/></g>
</svg>

<div class="c" style="left:618.22px;top:41.26px;font-size:18px;transform:scaleX(1.008);transform-origin:1.08px 0">Power</div>
<div class="c" style="left:677.32px;top:41.26px;font-size:18px;transform:scaleX(0.965);transform-origin:1.08px 0">Boost</div>
<div class="c" style="left:732.72px;top:41.26px;font-size:18px;transform:scaleX(1.096);transform-origin:1.08px 0">Mode</div>
<div class="c" style="left:789.66px;top:41.26px;font-size:18px;transform:scaleX(1.211);transform-origin:0.54px 0">–</div>
<div class="c" style="left:805.89px;top:41.26px;font-size:18px;transform:scaleX(1.016);transform-origin:0.36px 0">Setting</div>
<div class="c" style="left:870.82px;top:41.26px;font-size:18px;transform:scaleX(1.206);transform-origin:1.08px 0">1</div>
<div class="c" style="left:713.6px;top:68.08px;font-size:16.8px;word-spacing:-1px">Power Setting – 15W</div>
<div class="c" style="left:713.6px;top:91.08px;font-size:16.8px;word-spacing:-1px">Power Limit Setting – 40W</div>
<div class="c" style="left:713.6px;top:113.18px;font-size:16.8px;word-spacing:-1px">Boost time – 300ms</div>
<div class="c" style="left:713.6px;top:134.68px;font-size:16.8px;word-spacing:-1px">Boost again – n/a</div>
<div class="c" style="right:840.2px;top:223.04px;text-align:right;font-size:17.2px">1.5Ohm</div>
<div class="c" style="right:841.0px;top:245.94px;text-align:right;font-size:17.2px">4.8V</div>
<div class="c" style="right:840.8px;top:267.74px;text-align:right;font-size:17.2px">= 15.36W</div>
<div class="c" style="right:737.0px;top:223.04px;text-align:right;font-size:17.2px">1.5Ohm</div>
<div class="c" style="right:737.8px;top:245.94px;text-align:right;font-size:17.2px">5.52V</div>
<div class="c" style="right:737.8px;top:267.74px;text-align:right;font-size:17.2px">= 40.15W</div>
<div class="m" style="left:28.5px;top:5.70px;color:#081e52;letter-spacing:1.5px">AKTAKOM</div>
<div class="m" style="left:168px;top:3.50px;color:#400000;font-weight:bold">Stop</div>
<div class="m" style="left:695px;top:5.40px;color:#d6d6d6">480.0ms</div>
<div class="m" style="left:831.5px;top:4.20px;color:#d6d6d6">1:23</div>
<svg class="a" style="left:0;top:312px" width="26" height="24" viewBox="0 0 26 24"><path d="M0.8 1.2H17.5L23.5 12L17.5 22.5H0.8Z" fill="#000" stroke="#f2f21e" stroke-width="1.6"/><text x="4" y="18" font-family="Liberation Sans" font-size="16" fill="#f2f21e">2</text></svg>
<div class="a" style="left:30.5px;top:539px;width:225px;height:84px;border:2px solid #90c0cc;border-radius:6px;background:#000"></div>
<div class="circ" style="left:33px;top:541.5px;background:#e8e21c">2</div>
<svg class="a" style="left:52px;top:549px" width="13" height="10" viewBox="0 0 13 10"><path d="M1.5 8.5H11.5L6.5 1.5Z" fill="none" stroke="#e0e0e0" stroke-width="1.3"/></svg>
<div class="m" style="left:52px;top:545.20px;color:#d6d6d6"> y:2.96v</div>
<div class="m" style="left:52px;top:571.50px;color:#d6d6d6">y1:4.80v</div>
<div class="m" style="left:52px;top:597.80px;color:#d6d6d6">y2:7.76v</div>
<div class="a" style="left:0;top:623px;width:383px;height:97px;background:#2e9ad4"></div>
<div class="a" style="left:0px;top:622px;width:383px;height:1.6px;background:#5aa0b2"></div>
<div class="a" style="left:0px;top:646.2px;width:251px;height:1.8px;background:#5aa0b2"></div>
<div class="a" style="left:250.8px;top:623px;width:2.6px;height:50px;background:#5aa0b2"></div>
<div class="a" style="left:0px;top:671px;width:383px;height:2.2px;background:#5aa0b2"></div>
<div class="a" style="left:380.2px;top:623px;width:2.6px;height:97px;background:#5aa0b2"></div>
<div class="a" style="left:0px;top:716.8px;width:383px;height:3.2px;background:#5aa0b2"></div>
<div class="a" style="left:0px;top:623px;width:1px;height:97px;background:#5aa0b2"></div>
<div class="a" style="left:1px;top:623.6px;width:249.4px;height:22.6px;background:#000;border-radius:5px"></div>
<div class="a" style="left:1px;top:648px;width:249.4px;height:23px;background:#000;border-radius:5px"></div>
<div class="a" style="left:253.6px;top:623.6px;width:126.4px;height:47.4px;background:#000;border-radius:6px"></div>
<div class="a" style="left:1px;top:673.2px;width:379.2px;height:43.6px;background:#000;border-radius:6px"></div>
<div class="circ" style="left:2.8px;top:626.3px;background:#e80a0a"><svg width="19" height="19" viewBox="0 0 19 19" style="position:absolute;left:0;top:0"><path d="M10 15.8V4.2L6.4 7.6" fill="none" stroke="#300000" stroke-width="2"/></svg></div>
<div class="circ" style="left:2.8px;top:650.6px;background:#e8e21c">2</div>
<div class="m" style="left:21px;top:629.60px;color:#c81414">5V-</div>
<div class="m" style="left:127px;top:629.50px;color:#c81414">0.00div</div>
<div class="m" style="left:21px;top:653.70px;color:#d0c820">2V-</div>
<div class="m" style="left:127px;top:653.70px;color:#d0c820">0.00div</div>
<div class="m" style="left:262.3px;top:626.80px;color:#d6d6d6;letter-spacing:0.95px">(2.5KS/s)</div>
<div class="m" style="left:261.2px;top:650.80px;color:#d6d6d6">Depth:10K</div>
<div class="circ" style="left:2px;top:674.3px;background:#e8e21c">2</div>
<div class="circ" style="left:2px;top:697.5px;background:#e8e21c">2</div>
<div class="circ" style="left:192.8px;top:674.8px;background:#e8e21c">2</div>
<div class="circ" style="left:192.8px;top:697.2px;background:#e8e21c">2</div>
<div class="m" style="left:25px;top:676.40px;color:#d0c820">F:  ?</div>
<div class="m" style="left:25px;top:698.70px;color:#d0c820">+D:68.8%</div>
<div class="m" style="left:217.2px;top:676.60px;color:#d0c820">Vk:3.961v</div>
<div class="m" style="left:217.2px;top:698.70px;color:#d0c820">V:2.836v</div>
<div class="a" style="left:383px;top:645px;width:574px;height:75px;background:#0664aa"></div>
<div class="pill" style="left:383px;top:624px;width:119px;height:21px;border-radius:10.5px"></div>
<div class="m" style="left:398.5px;top:627.00px;color:#d6d6d6">M:200ms</div>
<div class="pill" style="left:797px;top:624.5px;width:155px;height:20.5px;border-radius:10px"></div>
<div class="circ" style="left:800.5px;top:624.5px;background:#e80a0a"><svg width="19" height="19" viewBox="0 0 19 19" style="position:absolute;left:0;top:0"><path d="M10 15.8V4.2L6.4 7.6" fill="none" stroke="#300000" stroke-width="2"/></svg></div>
<svg class="a" style="left:820px;top:625px" width="28" height="20" viewBox="0 0 28 20"><path d="M2 17.5H12L18.3 1.8H25.4" fill="none" stroke="#d6d6d6" stroke-width="1.6"/></svg>
<div class="m" style="left:848px;top:627.20px;color:#d6d6d6">0.00mV</div>
<div class="a" style="left:387px;top:649px;width:107px;height:66px;background:#0680ea;border-radius:3px;border-top:2px solid #4aa8f0;border-left:1px solid #3a98e8;border-right:2px solid #04488a;border-bottom:2px solid #04488a"></div>
<div class="a" style="left:717px;top:649px;width:106px;height:66px;background:#0680ea;border-radius:3px;border-top:2px solid #4aa8f0;border-left:1px solid #3a98e8;border-right:2px solid #04488a;border-bottom:2px solid #04488a"></div>
<div class="m" style="left:415px;top:660.60px;color:#08205a">Type</div>
<div class="a" style="left:409px;top:685.5px;width:60px;height:24px;background:#e4e4e4"></div>
<div class="m" style="left:409.5px;top:689.50px;color:#000">Image</div>
<div class="m" style="left:743.5px;top:674.70px;color:#08205a">Save</div>
</body></html>
